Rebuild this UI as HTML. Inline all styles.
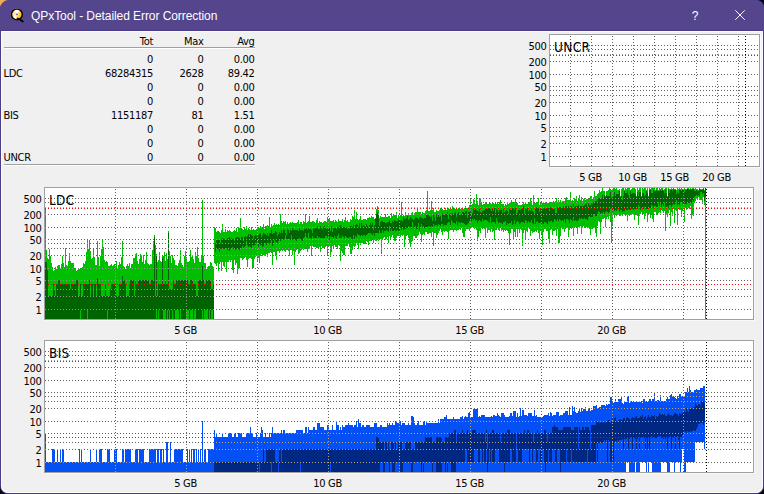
<!DOCTYPE html>
<html><head><meta charset="utf-8"><title>QPxTool - Detailed Error Correction</title>
<style>
html,body{margin:0;padding:0;}
body{width:764px;height:494px;overflow:hidden;background:#05051a;position:relative;}
.corner{position:absolute;left:0;top:0;width:10px;height:10px;background:#ecac58;}
.win{position:absolute;left:0;top:0;width:764px;height:494px;border-radius:9px 8px 8px 8px;background:#4a3c86;overflow:hidden;}
.title{position:absolute;left:0;top:0;width:764px;height:30px;background:#54458c;color:#fff;}
.client{position:absolute;left:1px;top:31px;width:762px;height:462px;border-radius:0 0 7px 7px;background:#f0f0f0;box-shadow:inset 0 0 0 1px #fbfbf8;}
.title .cap{position:absolute;left:31px;top:9px;font:12px/14px 'Liberation Sans',sans-serif;letter-spacing:-0.07px;white-space:nowrap;}
.title .q{position:absolute;left:691px;top:9px;width:8px;font:12px/14px 'Liberation Sans',sans-serif;text-align:center;}
.tbl{position:absolute;left:0;top:0;font:11px/14px 'DejaVu Sans Condensed','DejaVu Sans','Liberation Sans',sans-serif;letter-spacing:-0.3px;color:#000;}
.row{position:absolute;left:0;height:14px;width:260px;white-space:nowrap;}
.row span{position:absolute;top:0;}
.c0{left:3.5px;} .c1{right:107px;} .c2{right:56.5px;} .c3{right:5.5px;}
.hl{position:absolute;left:4px;width:251px;height:1px;background:#a0a0a0;border-bottom:1px solid #fff;}
svg{position:absolute;left:0;top:0;}
.t11{font:11px 'DejaVu Sans Condensed','DejaVu Sans','Liberation Sans',sans-serif;letter-spacing:-0.3px;fill:#000;}
.t13{font:13.5px 'DejaVu Sans Condensed','DejaVu Sans','Liberation Sans',sans-serif;letter-spacing:0.35px;fill:#000;}
</style></head>
<body>
<div class="corner"></div>
<div class="win">
<div class="title">
<svg width="764" height="31" viewBox="0 0 764 31" style="left:0;top:0">
<defs><linearGradient id="ig" x1="0" y1="0.2" x2="1" y2="0.8"><stop offset="0" stop-color="#ffd9a0"/><stop offset="0.45" stop-color="#ffe9a8"/><stop offset="0.75" stop-color="#ffc21a"/><stop offset="1" stop-color="#f0a000"/></linearGradient></defs>
<circle cx="16.9" cy="14.5" r="5.4" fill="url(#ig)"/>
<path d="M16.9 14.5L13.6 9.6A5.9 5.9 0 0 1 20 9.5Z" fill="#fff" opacity="0.85"/>
<path d="M16.9 14.5L12.4 18A5.9 5.9 0 0 0 15.6 20.2Z" fill="#fff" opacity="0.8"/>
<circle cx="16.9" cy="14.5" r="5.4" fill="none" stroke="#000" stroke-width="1.4"/>
<circle cx="16.9" cy="14.4" r="0.8" fill="#5a4a96"/>
<path d="M17.6 18.6L19.5 19.2L22.8 21.5" stroke="#000" stroke-width="1.7" fill="none" stroke-linecap="round"/>
<path d="M735.3 10.3L744.8 19.8M744.8 10.3L735.3 19.8" stroke="#fff" stroke-width="1" fill="none"/>
</svg>
<div class="cap">QPxTool - Detailed Error Correction</div>
<div class="q">?</div>
</div>
<div class="client"></div>
<div class="tbl">
<div class="row" style="top:35px"><span class="c1">Tot</span><span class="c2">Max</span><span class="c3">Avg</span></div>
<div class="hl" style="top:47px"></div>
<div class="row" style="top:53px"><span class="c0"></span><span class="c1">0</span><span class="c2">0</span><span class="c3">0.00</span></div>
<div class="row" style="top:67px"><span class="c0">LDC</span><span class="c1">68284315</span><span class="c2">2628</span><span class="c3">89.42</span></div>
<div class="row" style="top:81px"><span class="c0"></span><span class="c1">0</span><span class="c2">0</span><span class="c3">0.00</span></div>
<div class="row" style="top:95px"><span class="c0"></span><span class="c1">0</span><span class="c2">0</span><span class="c3">0.00</span></div>
<div class="row" style="top:109px"><span class="c0">BIS</span><span class="c1">1151187</span><span class="c2">81</span><span class="c3">1.51</span></div>
<div class="row" style="top:123px"><span class="c0"></span><span class="c1">0</span><span class="c2">0</span><span class="c3">0.00</span></div>
<div class="row" style="top:137px"><span class="c0"></span><span class="c1">0</span><span class="c2">0</span><span class="c3">0.00</span></div>
<div class="row" style="top:151px"><span class="c0">UNCR</span><span class="c1">0</span><span class="c2">0</span><span class="c3">0.00</span></div>
<div class="hl" style="top:164px"></div>
</div>
<svg width="764" height="494" viewBox="0 0 764 494">
<path d="M760.5 35V167.5H550" fill="none" stroke="#f8f8f8" stroke-width="1" shape-rendering="crispEdges"/>
<rect x="549.5" y="34.5" width="210" height="132" fill="#fff" stroke="#a0a0a0" stroke-width="1"/>
<g shape-rendering="crispEdges" stroke-width="1" stroke-dasharray="1 2" ><path d="M550 45.5H759M550 49.5H759M550 61.5H759M550 74.5H759M550 86.5H759M550 90.5H759M550 95.5H759M550 102.5H759M550 115.5H759M550 127.5H759M550 136.5H759M550 143.5H759M550 156.5H759M570.5 36V166M591.5 36V166M612.5 36V166M633.5 36V166M654.5 36V166M675.5 36V166M696.5 36V166M717.5 36V166M738.5 36V166" stroke="#606060" fill="none"/><path d="M550 54.5H759" stroke="#98a8a8" fill="none"/><path d="M550 55.5H759M550 131.5H759" stroke="#ff0000" fill="none"/></g>
<path d="M745.5 36V166" stroke="#000" stroke-width="1" stroke-dasharray="1 2" shape-rendering="crispEdges" fill="none"/>
<text x="546.5" y="50" text-anchor="end" class="t11">500</text>
<text x="546.5" y="66" text-anchor="end" class="t11">200</text>
<text x="546.5" y="79" text-anchor="end" class="t11">100</text>
<text x="546.5" y="91" text-anchor="end" class="t11">50</text>
<text x="546.5" y="107" text-anchor="end" class="t11">20</text>
<text x="546.5" y="120" text-anchor="end" class="t11">10</text>
<text x="546.5" y="132" text-anchor="end" class="t11">5</text>
<text x="546.5" y="148" text-anchor="end" class="t11">2</text>
<text x="546.5" y="161" text-anchor="end" class="t11">1</text>
<text x="590.6" y="181" text-anchor="middle" class="t11">5 GB</text>
<text x="632.6" y="181" text-anchor="middle" class="t11">10 GB</text>
<text x="674.6" y="181" text-anchor="middle" class="t11">15 GB</text>
<text x="716.6" y="181" text-anchor="middle" class="t11">20 GB</text>
<text x="554" y="52" class="t13">UNCR</text>
<path d="M754.5 188V320.5H45" fill="none" stroke="#f8f8f8" stroke-width="1" shape-rendering="crispEdges"/>
<rect x="44.5" y="187.5" width="709" height="132" fill="#fff" stroke="#a0a0a0" stroke-width="1"/>
<g shape-rendering="crispEdges" stroke-width="1" stroke-dasharray="1 2" ><path d="M45 198.5H753M45 202.5H753M45 214.5H753M45 227.5H753M45 239.5H753M45 243.5H753M45 248.5H753M45 255.5H753M45 268.5H753M45 280.5H753M45 289.5H753M45 296.5H753M45 309.5H753M115.5 189V319M186.5 189V319M257.5 189V319M328.5 189V319M399.5 189V319M470.5 189V319M541.5 189V319M612.5 189V319M683.5 189V319" stroke="#606060" fill="none"/><path d="M45 207.5H753" stroke="#98a8a8" fill="none"/><path d="M45 208.5H753M45 284.5H753" stroke="#ff0000" fill="none"/></g>
<defs><clipPath id="cl"><path d="M45 208v111h1v-111zM46 250v69h1v-69zM47 258v61h1v-61zM48 259v60h1v-60zM49 249v70h1v-70zM50 256v63h1v-63zM51 263v56h1v-56zM52 267v52h1v-52zM53 271v48h1v-48zM54 270v49h1v-49zM55 267v52h1v-52zM56 269v50h1v-50zM57 266v53h1v-53zM58 265v54h1v-54zM59 265v54h1v-54zM60 268v51h1v-51zM61 264v55h1v-55zM62 256v63h1v-63zM63 263v56h1v-56zM64 267v52h1v-52zM65 248v71h1v-71zM66 265v54h1v-54zM67 266v53h1v-53zM68 261v58h1v-58zM69 253v66h1v-66zM70 261v58h1v-58zM71 263v56h1v-56zM72 263v56h1v-56zM73 263v56h1v-56zM74 268v51h1v-51zM75 269v50h1v-50zM76 271v48h1v-48zM77 270v49h1v-49zM78 268v51h1v-51zM79 269v50h1v-50zM80 268v51h1v-51zM81 269v50h1v-50zM82 267v52h1v-52zM83 263v56h1v-56zM84 264v55h1v-55zM85 261v58h1v-58zM86 252v67h1v-67zM87 240v79h1v-79zM88 249v70h1v-70zM89 240v79h1v-79zM90 251v68h1v-68zM91 259v60h1v-60zM92 258v61h1v-61zM93 249v70h1v-70zM94 257v62h1v-62zM95 265v54h1v-54zM96 265v54h1v-54zM97 241v78h1v-78zM98 257v62h1v-62zM99 266v53h1v-53zM100 256v63h1v-63zM101 249v70h1v-70zM102 240v79h1v-79zM103 247v72h1v-72zM104 260v59h1v-59zM105 262v57h1v-57zM106 261v58h1v-58zM107 262v57h1v-57zM108 266v53h1v-53zM109 266v53h1v-53zM110 265v54h1v-54zM111 264v55h1v-55zM112 266v53h1v-53zM113 265v54h1v-54zM114 264v55h1v-55zM115 266v53h1v-53zM116 261v58h1v-58zM117 268v51h1v-51zM118 265v54h1v-54zM119 262v57h1v-57zM120 264v55h1v-55zM121 257v62h1v-62zM122 241v78h1v-78zM123 266v53h1v-53zM124 267v52h1v-52zM125 269v50h1v-50zM126 266v53h1v-53zM127 264v55h1v-55zM128 266v53h1v-53zM129 263v56h1v-56zM130 268v51h1v-51zM131 264v55h1v-55zM132 264v55h1v-55zM133 258v61h1v-61zM134 258v61h1v-61zM135 254v65h1v-65zM136 253v66h1v-66zM137 261v58h1v-58zM138 264v55h1v-55zM139 259v60h1v-60zM140 254v65h1v-65zM141 255v64h1v-64zM142 262v57h1v-57zM143 255v64h1v-64zM144 264v55h1v-55zM145 260v59h1v-59zM146 252v67h1v-67zM147 263v56h1v-56zM148 264v55h1v-55zM149 265v54h1v-54zM150 264v55h1v-55zM151 264v55h1v-55zM152 250v69h1v-69zM153 241v78h1v-78zM154 235v84h1v-84zM155 245v74h1v-74zM156 254v65h1v-65zM157 262v57h1v-57zM158 260v59h1v-59zM159 252v67h1v-67zM160 261v58h1v-58zM161 262v57h1v-57zM162 256v63h1v-63zM163 256v63h1v-63zM164 252v67h1v-67zM165 261v58h1v-58zM166 253v66h1v-66zM167 259v60h1v-60zM168 231v88h1v-88zM169 251v68h1v-68zM170 256v63h1v-63zM171 263v56h1v-56zM172 255v64h1v-64zM173 258v61h1v-61zM174 260v59h1v-59zM175 265v54h1v-54zM176 265v54h1v-54zM177 266v53h1v-53zM178 263v56h1v-56zM179 260v59h1v-59zM180 250v69h1v-69zM181 263v56h1v-56zM182 265v54h1v-54zM183 267v52h1v-52zM184 256v63h1v-63zM185 251v68h1v-68zM186 257v62h1v-62zM187 262v57h1v-57zM188 262v57h1v-57zM189 261v58h1v-58zM190 250v69h1v-69zM191 257v62h1v-62zM192 255v64h1v-64zM193 259v60h1v-60zM194 263v56h1v-56zM195 252v67h1v-67zM196 256v63h1v-63zM197 247v72h1v-72zM198 258v61h1v-61zM199 262v57h1v-57zM200 262v57h1v-57zM201 256v63h1v-63zM202 200v119h1v-119zM203 256v63h1v-63zM204 263v56h1v-56zM205 263v56h1v-56zM206 269v50h1v-50zM207 267v52h1v-52zM208 266v53h1v-53zM209 266v53h1v-53zM210 262v57h1v-57zM211 263v56h1v-56zM212 266v53h1v-53zM213 267v52h1v-52zM214 227v36h1v-36zM215 228v36h1v-36zM216 232v34h1v-34zM217 231v32h1v-32zM218 231v40h1v-40zM219 232v32h1v-32zM220 233v29h1v-29zM221 230v41h1v-41zM222 224v38h1v-38zM223 232v34h1v-34zM224 232v35h1v-35zM225 229v33h1v-33zM226 232v40h1v-40zM227 230v32h1v-32zM228 231v31h1v-31zM229 230v30h1v-30zM230 231v31h1v-31zM231 232v28h1v-28zM232 232v38h1v-38zM233 231v42h1v-42zM234 230v30h1v-30zM235 231v34h1v-34zM236 228v35h1v-35zM237 232v42h1v-42zM238 227v42h1v-42zM239 228v40h1v-40zM240 218v40h1v-40zM241 228v30h1v-30zM242 229v31h1v-31zM243 230v29h1v-29zM244 227v31h1v-31zM245 229v28h1v-28zM246 226v34h1v-34zM247 230v37h1v-37zM248 228v31h1v-31zM249 229v29h1v-29zM250 230v28h1v-28zM251 227v32h1v-32zM252 230v38h1v-38zM253 229v39h1v-39zM254 230v29h1v-29zM255 230v27h1v-27zM256 229v27h1v-27zM257 227v34h1v-34zM258 228v30h1v-30zM259 228v35h1v-35zM260 226v30h1v-30zM261 227v27h1v-27zM262 227v29h1v-29zM263 224v31h1v-31zM264 229v27h1v-27zM265 226v30h1v-30zM266 226v28h1v-28zM267 225v32h1v-32zM268 226v27h1v-27zM269 217v36h1v-36zM270 227v25h1v-25zM271 224v29h1v-29zM272 226v39h1v-39zM273 225v27h1v-27zM274 223v29h1v-29zM275 225v31h1v-31zM276 224v36h1v-36zM277 225v26h1v-26zM278 224v27h1v-27zM279 225v28h1v-28zM280 214v37h1v-37zM281 221v29h1v-29zM282 223v28h1v-28zM283 221v29h1v-29zM284 222v29h1v-29zM285 221v31h1v-31zM286 224v26h1v-26zM287 222v28h1v-28zM288 224v27h1v-27zM289 223v33h1v-33zM290 222v28h1v-28zM291 223v27h1v-27zM292 222v33h1v-33zM293 223v28h1v-28zM294 223v42h1v-42zM295 223v29h1v-29zM296 223v27h1v-27zM297 222v26h1v-26zM298 220v34h1v-34zM299 224v29h1v-29zM300 222v29h1v-29zM301 222v28h1v-28zM302 224v25h1v-25zM303 221v29h1v-29zM304 222v27h1v-27zM305 214v35h1v-35zM306 223v25h1v-25zM307 222v30h1v-30zM308 221v28h1v-28zM309 216v33h1v-33zM310 222v24h1v-24zM311 222v34h1v-34zM312 221v25h1v-25zM313 221v26h1v-26zM314 222v25h1v-25zM315 223v24h1v-24zM316 220v28h1v-28zM317 218v30h1v-30zM318 223v25h1v-25zM319 221v26h1v-26zM320 222v30h1v-30zM321 222v24h1v-24zM322 223v25h1v-25zM323 222v26h1v-26zM324 221v27h1v-27zM325 221v26h1v-26zM326 222v24h1v-24zM327 217v38h1v-38zM328 220v26h1v-26zM329 218v28h1v-28zM330 221v36h1v-36zM331 221v31h1v-31zM332 221v25h1v-25zM333 220v28h1v-28zM334 222v23h1v-23zM335 220v27h1v-27zM336 221v26h1v-26zM337 222v27h1v-27zM338 219v26h1v-26zM339 221v25h1v-25zM340 221v40h1v-40zM341 221v30h1v-30zM342 219v34h1v-34zM343 222v33h1v-33zM344 220v35h1v-35zM345 217v29h1v-29zM346 221v25h1v-25zM347 220v26h1v-26zM348 222v22h1v-22zM349 222v25h1v-25zM350 219v35h1v-35zM351 220v34h1v-34zM352 216v34h1v-34zM353 217v29h1v-29zM354 210v37h1v-37zM355 219v27h1v-27zM356 212v31h1v-31zM357 219v26h1v-26zM358 220v29h1v-29zM359 219v24h1v-24zM360 216v29h1v-29zM361 220v23h1v-23zM362 220v23h1v-23zM363 219v24h1v-24zM364 219v25h1v-25zM365 219v25h1v-25zM366 220v21h1v-21zM367 218v24h1v-24zM368 218v27h1v-27zM369 217v24h1v-24zM370 218v23h1v-23zM371 216v25h1v-25zM372 217v22h1v-22zM373 217v26h1v-26zM374 219v21h1v-21zM375 218v23h1v-23zM376 209v32h1v-32zM377 206v34h1v-34zM378 210v31h1v-31zM379 218v22h1v-22zM380 216v23h1v-23zM381 217v37h1v-37zM382 217v23h1v-23zM383 217v21h1v-21zM384 217v20h1v-20zM385 214v26h1v-26zM386 217v22h1v-22zM387 217v20h1v-20zM388 216v27h1v-27zM389 216v20h1v-20zM390 218v21h1v-21zM391 213v24h1v-24zM392 216v19h1v-19zM393 215v23h1v-23zM394 215v26h1v-26zM395 215v26h1v-26zM396 212v26h1v-26zM397 218v18h1v-18zM398 215v21h1v-21zM399 216v20h1v-20zM400 215v22h1v-22zM401 202v33h1v-33zM402 216v20h1v-20zM403 215v20h1v-20zM404 216v31h1v-31zM405 212v28h1v-28zM406 215v21h1v-21zM407 215v20h1v-20zM408 213v25h1v-25zM409 215v28h1v-28zM410 215v32h1v-32zM411 213v29h1v-29zM412 212v29h1v-29zM413 215v21h1v-21zM414 213v23h1v-23zM415 212v26h1v-26zM416 212v26h1v-26zM417 209v27h1v-27zM418 212v23h1v-23zM419 212v20h1v-20zM420 212v22h1v-22zM421 214v28h1v-28zM422 212v23h1v-23zM423 213v21h1v-21zM424 213v22h1v-22zM425 211v21h1v-21zM426 210v22h1v-22zM427 191v43h1v-43zM428 211v23h1v-23zM429 211v22h1v-22zM430 210v23h1v-23zM431 201v36h1v-36zM432 210v22h1v-22zM433 208v38h1v-38zM434 212v21h1v-21zM435 212v21h1v-21zM436 210v28h1v-28zM437 211v24h1v-24zM438 211v22h1v-22zM439 210v21h1v-21zM440 208v21h1v-21zM441 209v23h1v-23zM442 209v26h1v-26zM443 210v21h1v-21zM444 210v22h1v-22zM445 208v23h1v-23zM446 210v21h1v-21zM447 209v23h1v-23zM448 208v31h1v-31zM449 209v22h1v-22zM450 207v23h1v-23zM451 209v21h1v-21zM452 206v24h1v-24zM453 208v24h1v-24zM454 208v22h1v-22zM455 209v21h1v-21zM456 208v23h1v-23zM457 209v21h1v-21zM458 208v22h1v-22zM459 209v20h1v-20zM460 209v21h1v-21zM461 208v20h1v-20zM462 209v24h1v-24zM463 209v28h1v-28zM464 208v29h1v-29zM465 206v25h1v-25zM466 208v21h1v-21zM467 208v21h1v-21zM468 208v21h1v-21zM469 205v26h1v-26zM470 199v30h1v-30zM471 205v23h1v-23zM472 204v23h1v-23zM473 199v29h1v-29zM474 200v29h1v-29zM475 204v24h1v-24zM476 194v36h1v-36zM477 201v40h1v-40zM478 205v32h1v-32zM479 198v33h1v-33zM480 198v35h1v-35zM481 202v26h1v-26zM482 205v24h1v-24zM483 204v23h1v-23zM484 204v25h1v-25zM485 202v36h1v-36zM486 203v25h1v-25zM487 204v29h1v-29zM488 204v26h1v-26zM489 203v27h1v-27zM490 203v29h1v-29zM491 204v25h1v-25zM492 203v29h1v-29zM493 203v28h1v-28zM494 204v36h1v-36zM495 203v27h1v-27zM496 204v26h1v-26zM497 202v26h1v-26zM498 204v26h1v-26zM499 202v29h1v-29zM500 200v28h1v-28zM501 204v27h1v-27zM502 204v26h1v-26zM503 204v28h1v-28zM504 206v24h1v-24zM505 204v27h1v-27zM506 205v25h1v-25zM507 202v29h1v-29zM508 204v29h1v-29zM509 203v42h1v-42zM510 202v31h1v-31zM511 200v29h1v-29zM512 202v27h1v-27zM513 203v37h1v-37zM514 202v30h1v-30zM515 199v38h1v-38zM516 203v26h1v-26zM517 203v34h1v-34zM518 205v24h1v-24zM519 205v28h1v-28zM520 205v24h1v-24zM521 205v25h1v-25zM522 204v42h1v-42zM523 202v31h1v-31zM524 204v26h1v-26zM525 202v37h1v-37zM526 204v27h1v-27zM527 204v28h1v-28zM528 203v25h1v-25zM529 202v27h1v-27zM530 198v38h1v-38zM531 201v30h1v-30zM532 205v28h1v-28zM533 195v37h1v-37zM534 203v29h1v-29zM535 203v28h1v-28zM536 202v30h1v-30zM537 203v27h1v-27zM538 198v35h1v-35zM539 205v34h1v-34zM540 203v28h1v-28zM541 202v32h1v-32zM542 203v42h1v-42zM543 202v30h1v-30zM544 203v26h1v-26zM545 202v27h1v-27zM546 203v28h1v-28zM547 203v28h1v-28zM548 203v36h1v-36zM549 203v41h1v-41zM550 202v28h1v-28zM551 202v27h1v-27zM552 202v33h1v-33zM553 201v30h1v-30zM554 202v29h1v-29zM555 201v29h1v-29zM556 198v38h1v-38zM557 202v27h1v-27zM558 200v44h1v-44zM559 202v41h1v-41zM560 200v36h1v-36zM561 202v26h1v-26zM562 201v28h1v-28zM563 201v28h1v-28zM564 201v31h1v-31zM565 198v31h1v-31zM566 197v31h1v-31zM567 200v28h1v-28zM568 200v37h1v-37zM569 200v30h1v-30zM570 192v35h1v-35zM571 201v28h1v-28zM572 200v28h1v-28zM573 201v35h1v-35zM574 198v30h1v-30zM575 199v28h1v-28zM576 196v31h1v-31zM577 201v33h1v-33zM578 198v29h1v-29zM579 195v33h1v-33zM580 200v26h1v-26zM581 197v37h1v-37zM582 201v27h1v-27zM583 199v27h1v-27zM584 198v30h1v-30zM585 200v27h1v-27zM586 199v28h1v-28zM587 199v29h1v-29zM588 199v29h1v-29zM589 198v31h1v-31zM590 196v39h1v-39zM591 196v33h1v-33zM592 199v30h1v-30zM593 197v31h1v-31zM594 191v37h1v-37zM595 196v37h1v-37zM596 196v41h1v-41zM597 194v32h1v-32zM598 193v28h1v-28zM599 190v32h1v-32zM600 192v42h1v-42zM601 191v31h1v-31zM602 188v31h1v-31zM603 191v28h1v-28zM604 191v27h1v-27zM605 196v31h1v-31zM606 191v28h1v-28zM607 191v26h1v-26zM608 190v29h1v-29zM609 188v28h1v-28zM610 189v33h1v-33zM611 190v53h1v-53zM612 189v36h1v-36zM613 188v27h1v-27zM614 188v30h1v-30zM615 189v25h1v-25zM616 188v28h1v-28zM617 190v25h1v-25zM618 190v25h1v-25zM619 189v27h1v-27zM620 196v20h1v-20zM621 189v26h1v-26zM622 188v28h1v-28zM623 188v26h1v-26zM624 190v25h1v-25zM625 188v28h1v-28zM626 189v26h1v-26zM627 188v33h1v-33zM628 188v27h1v-27zM629 188v28h1v-28zM630 190v25h1v-25zM631 189v26h1v-26zM632 188v26h1v-26zM633 188v27h1v-27zM634 188v32h1v-32zM635 189v26h1v-26zM636 196v18h1v-18zM637 188v28h1v-28zM638 190v35h1v-35zM639 188v28h1v-28zM640 188v26h1v-26zM641 196v16h1v-16zM642 188v26h1v-26zM643 189v25h1v-25zM644 188v31h1v-31zM645 188v28h1v-28zM646 190v23h1v-23zM647 188v34h1v-34zM648 196v18h1v-18zM649 188v26h1v-26zM650 189v29h1v-29zM651 188v26h1v-26zM652 188v31h1v-31zM653 188v34h1v-34zM654 188v24h1v-24zM655 190v22h1v-22zM656 188v27h1v-27zM657 188v26h1v-26zM658 190v23h1v-23zM659 188v24h1v-24zM660 189v24h1v-24zM661 188v22h1v-22zM662 188v23h1v-23zM663 190v23h1v-23zM664 189v22h1v-22zM665 188v43h1v-43zM666 188v27h1v-27zM667 196v21h1v-21zM668 188v25h1v-25zM669 189v21h1v-21zM670 189v37h1v-37zM671 188v24h1v-24zM672 189v27h1v-27zM673 188v21h1v-21zM674 189v34h1v-34zM675 189v21h1v-21zM676 190v21h1v-21zM677 188v37h1v-37zM678 189v20h1v-20zM679 188v22h1v-22zM680 189v21h1v-21zM681 188v29h1v-29zM682 189v22h1v-22zM683 189v20h1v-20zM684 188v34h1v-34zM685 189v19h1v-19zM686 189v21h1v-21zM687 188v21h1v-21zM688 188v20h1v-20zM689 189v20h1v-20zM690 188v18h1v-18zM691 189v30h1v-30zM692 188v27h1v-27zM693 188v28h1v-28zM694 189v14h1v-14zM695 188v13h1v-13zM696 189v10h1v-10zM697 189v11h1v-11zM698 190v7h1v-7zM699 188v12h1v-12zM700 189v11h1v-11zM701 189v11h1v-11zM702 189v15h1v-15zM703 188v9h1v-9zM704 190v15h1v-15zM705 188v131h1v-131z"/></clipPath></defs><g shape-rendering="crispEdges"><path d="M45 208v111h1v-111zM46 250v69h1v-69zM47 258v61h1v-61zM48 259v60h1v-60zM49 249v70h1v-70zM50 256v63h1v-63zM51 263v56h1v-56zM52 267v52h1v-52zM53 271v48h1v-48zM54 270v49h1v-49zM55 267v52h1v-52zM56 269v50h1v-50zM57 266v53h1v-53zM58 265v54h1v-54zM59 265v54h1v-54zM60 268v51h1v-51zM61 264v55h1v-55zM62 256v63h1v-63zM63 263v56h1v-56zM64 267v52h1v-52zM65 248v71h1v-71zM66 265v54h1v-54zM67 266v53h1v-53zM68 261v58h1v-58zM69 253v66h1v-66zM70 261v58h1v-58zM71 263v56h1v-56zM72 263v56h1v-56zM73 263v56h1v-56zM74 268v51h1v-51zM75 269v50h1v-50zM76 271v48h1v-48zM77 270v49h1v-49zM78 268v51h1v-51zM79 269v50h1v-50zM80 268v51h1v-51zM81 269v50h1v-50zM82 267v52h1v-52zM83 263v56h1v-56zM84 264v55h1v-55zM85 261v58h1v-58zM86 252v67h1v-67zM87 240v79h1v-79zM88 249v70h1v-70zM89 240v79h1v-79zM90 251v68h1v-68zM91 259v60h1v-60zM92 258v61h1v-61zM93 249v70h1v-70zM94 257v62h1v-62zM95 265v54h1v-54zM96 265v54h1v-54zM97 241v78h1v-78zM98 257v62h1v-62zM99 266v53h1v-53zM100 256v63h1v-63zM101 249v70h1v-70zM102 240v79h1v-79zM103 247v72h1v-72zM104 260v59h1v-59zM105 262v57h1v-57zM106 261v58h1v-58zM107 262v57h1v-57zM108 266v53h1v-53zM109 266v53h1v-53zM110 265v54h1v-54zM111 264v55h1v-55zM112 266v53h1v-53zM113 265v54h1v-54zM114 264v55h1v-55zM115 266v53h1v-53zM116 261v58h1v-58zM117 268v51h1v-51zM118 265v54h1v-54zM119 262v57h1v-57zM120 264v55h1v-55zM121 257v62h1v-62zM122 241v78h1v-78zM123 266v53h1v-53zM124 267v52h1v-52zM125 269v50h1v-50zM126 266v53h1v-53zM127 264v55h1v-55zM128 266v53h1v-53zM129 263v56h1v-56zM130 268v51h1v-51zM131 264v55h1v-55zM132 264v55h1v-55zM133 258v61h1v-61zM134 258v61h1v-61zM135 254v65h1v-65zM136 253v66h1v-66zM137 261v58h1v-58zM138 264v55h1v-55zM139 259v60h1v-60zM140 254v65h1v-65zM141 255v64h1v-64zM142 262v57h1v-57zM143 255v64h1v-64zM144 264v55h1v-55zM145 260v59h1v-59zM146 252v67h1v-67zM147 263v56h1v-56zM148 264v55h1v-55zM149 265v54h1v-54zM150 264v55h1v-55zM151 264v55h1v-55zM152 250v69h1v-69zM153 241v78h1v-78zM154 235v84h1v-84zM155 245v74h1v-74zM156 254v65h1v-65zM157 262v57h1v-57zM158 260v59h1v-59zM159 252v67h1v-67zM160 261v58h1v-58zM161 262v57h1v-57zM162 256v63h1v-63zM163 256v63h1v-63zM164 252v67h1v-67zM165 261v58h1v-58zM166 253v66h1v-66zM167 259v60h1v-60zM168 231v88h1v-88zM169 251v68h1v-68zM170 256v63h1v-63zM171 263v56h1v-56zM172 255v64h1v-64zM173 258v61h1v-61zM174 260v59h1v-59zM175 265v54h1v-54zM176 265v54h1v-54zM177 266v53h1v-53zM178 263v56h1v-56zM179 260v59h1v-59zM180 250v69h1v-69zM181 263v56h1v-56zM182 265v54h1v-54zM183 267v52h1v-52zM184 256v63h1v-63zM185 251v68h1v-68zM186 257v62h1v-62zM187 262v57h1v-57zM188 262v57h1v-57zM189 261v58h1v-58zM190 250v69h1v-69zM191 257v62h1v-62zM192 255v64h1v-64zM193 259v60h1v-60zM194 263v56h1v-56zM195 252v67h1v-67zM196 256v63h1v-63zM197 247v72h1v-72zM198 258v61h1v-61zM199 262v57h1v-57zM200 262v57h1v-57zM201 256v63h1v-63zM202 200v119h1v-119zM203 256v63h1v-63zM204 263v56h1v-56zM205 263v56h1v-56zM206 269v50h1v-50zM207 267v52h1v-52zM208 266v53h1v-53zM209 266v53h1v-53zM210 262v57h1v-57zM211 263v56h1v-56zM212 266v53h1v-53zM213 267v52h1v-52zM214 227v36h1v-36zM215 228v36h1v-36zM216 232v34h1v-34zM217 231v32h1v-32zM218 231v40h1v-40zM219 232v32h1v-32zM220 233v29h1v-29zM221 230v41h1v-41zM222 224v38h1v-38zM223 232v34h1v-34zM224 232v35h1v-35zM225 229v33h1v-33zM226 232v40h1v-40zM227 230v32h1v-32zM228 231v31h1v-31zM229 230v30h1v-30zM230 231v31h1v-31zM231 232v28h1v-28zM232 232v38h1v-38zM233 231v42h1v-42zM234 230v30h1v-30zM235 231v34h1v-34zM236 228v35h1v-35zM237 232v42h1v-42zM238 227v42h1v-42zM239 228v40h1v-40zM240 218v40h1v-40zM241 228v30h1v-30zM242 229v31h1v-31zM243 230v29h1v-29zM244 227v31h1v-31zM245 229v28h1v-28zM246 226v34h1v-34zM247 230v37h1v-37zM248 228v31h1v-31zM249 229v29h1v-29zM250 230v28h1v-28zM251 227v32h1v-32zM252 230v38h1v-38zM253 229v39h1v-39zM254 230v29h1v-29zM255 230v27h1v-27zM256 229v27h1v-27zM257 227v34h1v-34zM258 228v30h1v-30zM259 228v35h1v-35zM260 226v30h1v-30zM261 227v27h1v-27zM262 227v29h1v-29zM263 224v31h1v-31zM264 229v27h1v-27zM265 226v30h1v-30zM266 226v28h1v-28zM267 225v32h1v-32zM268 226v27h1v-27zM269 217v36h1v-36zM270 227v25h1v-25zM271 224v29h1v-29zM272 226v39h1v-39zM273 225v27h1v-27zM274 223v29h1v-29zM275 225v31h1v-31zM276 224v36h1v-36zM277 225v26h1v-26zM278 224v27h1v-27zM279 225v28h1v-28zM280 214v37h1v-37zM281 221v29h1v-29zM282 223v28h1v-28zM283 221v29h1v-29zM284 222v29h1v-29zM285 221v31h1v-31zM286 224v26h1v-26zM287 222v28h1v-28zM288 224v27h1v-27zM289 223v33h1v-33zM290 222v28h1v-28zM291 223v27h1v-27zM292 222v33h1v-33zM293 223v28h1v-28zM294 223v42h1v-42zM295 223v29h1v-29zM296 223v27h1v-27zM297 222v26h1v-26zM298 220v34h1v-34zM299 224v29h1v-29zM300 222v29h1v-29zM301 222v28h1v-28zM302 224v25h1v-25zM303 221v29h1v-29zM304 222v27h1v-27zM305 214v35h1v-35zM306 223v25h1v-25zM307 222v30h1v-30zM308 221v28h1v-28zM309 216v33h1v-33zM310 222v24h1v-24zM311 222v34h1v-34zM312 221v25h1v-25zM313 221v26h1v-26zM314 222v25h1v-25zM315 223v24h1v-24zM316 220v28h1v-28zM317 218v30h1v-30zM318 223v25h1v-25zM319 221v26h1v-26zM320 222v30h1v-30zM321 222v24h1v-24zM322 223v25h1v-25zM323 222v26h1v-26zM324 221v27h1v-27zM325 221v26h1v-26zM326 222v24h1v-24zM327 217v38h1v-38zM328 220v26h1v-26zM329 218v28h1v-28zM330 221v36h1v-36zM331 221v31h1v-31zM332 221v25h1v-25zM333 220v28h1v-28zM334 222v23h1v-23zM335 220v27h1v-27zM336 221v26h1v-26zM337 222v27h1v-27zM338 219v26h1v-26zM339 221v25h1v-25zM340 221v40h1v-40zM341 221v30h1v-30zM342 219v34h1v-34zM343 222v33h1v-33zM344 220v35h1v-35zM345 217v29h1v-29zM346 221v25h1v-25zM347 220v26h1v-26zM348 222v22h1v-22zM349 222v25h1v-25zM350 219v35h1v-35zM351 220v34h1v-34zM352 216v34h1v-34zM353 217v29h1v-29zM354 210v37h1v-37zM355 219v27h1v-27zM356 212v31h1v-31zM357 219v26h1v-26zM358 220v29h1v-29zM359 219v24h1v-24zM360 216v29h1v-29zM361 220v23h1v-23zM362 220v23h1v-23zM363 219v24h1v-24zM364 219v25h1v-25zM365 219v25h1v-25zM366 220v21h1v-21zM367 218v24h1v-24zM368 218v27h1v-27zM369 217v24h1v-24zM370 218v23h1v-23zM371 216v25h1v-25zM372 217v22h1v-22zM373 217v26h1v-26zM374 219v21h1v-21zM375 218v23h1v-23zM376 209v32h1v-32zM377 206v34h1v-34zM378 210v31h1v-31zM379 218v22h1v-22zM380 216v23h1v-23zM381 217v37h1v-37zM382 217v23h1v-23zM383 217v21h1v-21zM384 217v20h1v-20zM385 214v26h1v-26zM386 217v22h1v-22zM387 217v20h1v-20zM388 216v27h1v-27zM389 216v20h1v-20zM390 218v21h1v-21zM391 213v24h1v-24zM392 216v19h1v-19zM393 215v23h1v-23zM394 215v26h1v-26zM395 215v26h1v-26zM396 212v26h1v-26zM397 218v18h1v-18zM398 215v21h1v-21zM399 216v20h1v-20zM400 215v22h1v-22zM401 202v33h1v-33zM402 216v20h1v-20zM403 215v20h1v-20zM404 216v31h1v-31zM405 212v28h1v-28zM406 215v21h1v-21zM407 215v20h1v-20zM408 213v25h1v-25zM409 215v28h1v-28zM410 215v32h1v-32zM411 213v29h1v-29zM412 212v29h1v-29zM413 215v21h1v-21zM414 213v23h1v-23zM415 212v26h1v-26zM416 212v26h1v-26zM417 209v27h1v-27zM418 212v23h1v-23zM419 212v20h1v-20zM420 212v22h1v-22zM421 214v28h1v-28zM422 212v23h1v-23zM423 213v21h1v-21zM424 213v22h1v-22zM425 211v21h1v-21zM426 210v22h1v-22zM427 191v43h1v-43zM428 211v23h1v-23zM429 211v22h1v-22zM430 210v23h1v-23zM431 201v36h1v-36zM432 210v22h1v-22zM433 208v38h1v-38zM434 212v21h1v-21zM435 212v21h1v-21zM436 210v28h1v-28zM437 211v24h1v-24zM438 211v22h1v-22zM439 210v21h1v-21zM440 208v21h1v-21zM441 209v23h1v-23zM442 209v26h1v-26zM443 210v21h1v-21zM444 210v22h1v-22zM445 208v23h1v-23zM446 210v21h1v-21zM447 209v23h1v-23zM448 208v31h1v-31zM449 209v22h1v-22zM450 207v23h1v-23zM451 209v21h1v-21zM452 206v24h1v-24zM453 208v24h1v-24zM454 208v22h1v-22zM455 209v21h1v-21zM456 208v23h1v-23zM457 209v21h1v-21zM458 208v22h1v-22zM459 209v20h1v-20zM460 209v21h1v-21zM461 208v20h1v-20zM462 209v24h1v-24zM463 209v28h1v-28zM464 208v29h1v-29zM465 206v25h1v-25zM466 208v21h1v-21zM467 208v21h1v-21zM468 208v21h1v-21zM469 205v26h1v-26zM470 199v30h1v-30zM471 205v23h1v-23zM472 204v23h1v-23zM473 199v29h1v-29zM474 200v29h1v-29zM475 204v24h1v-24zM476 194v36h1v-36zM477 201v40h1v-40zM478 205v32h1v-32zM479 198v33h1v-33zM480 198v35h1v-35zM481 202v26h1v-26zM482 205v24h1v-24zM483 204v23h1v-23zM484 204v25h1v-25zM485 202v36h1v-36zM486 203v25h1v-25zM487 204v29h1v-29zM488 204v26h1v-26zM489 203v27h1v-27zM490 203v29h1v-29zM491 204v25h1v-25zM492 203v29h1v-29zM493 203v28h1v-28zM494 204v36h1v-36zM495 203v27h1v-27zM496 204v26h1v-26zM497 202v26h1v-26zM498 204v26h1v-26zM499 202v29h1v-29zM500 200v28h1v-28zM501 204v27h1v-27zM502 204v26h1v-26zM503 204v28h1v-28zM504 206v24h1v-24zM505 204v27h1v-27zM506 205v25h1v-25zM507 202v29h1v-29zM508 204v29h1v-29zM509 203v42h1v-42zM510 202v31h1v-31zM511 200v29h1v-29zM512 202v27h1v-27zM513 203v37h1v-37zM514 202v30h1v-30zM515 199v38h1v-38zM516 203v26h1v-26zM517 203v34h1v-34zM518 205v24h1v-24zM519 205v28h1v-28zM520 205v24h1v-24zM521 205v25h1v-25zM522 204v42h1v-42zM523 202v31h1v-31zM524 204v26h1v-26zM525 202v37h1v-37zM526 204v27h1v-27zM527 204v28h1v-28zM528 203v25h1v-25zM529 202v27h1v-27zM530 198v38h1v-38zM531 201v30h1v-30zM532 205v28h1v-28zM533 195v37h1v-37zM534 203v29h1v-29zM535 203v28h1v-28zM536 202v30h1v-30zM537 203v27h1v-27zM538 198v35h1v-35zM539 205v34h1v-34zM540 203v28h1v-28zM541 202v32h1v-32zM542 203v42h1v-42zM543 202v30h1v-30zM544 203v26h1v-26zM545 202v27h1v-27zM546 203v28h1v-28zM547 203v28h1v-28zM548 203v36h1v-36zM549 203v41h1v-41zM550 202v28h1v-28zM551 202v27h1v-27zM552 202v33h1v-33zM553 201v30h1v-30zM554 202v29h1v-29zM555 201v29h1v-29zM556 198v38h1v-38zM557 202v27h1v-27zM558 200v44h1v-44zM559 202v41h1v-41zM560 200v36h1v-36zM561 202v26h1v-26zM562 201v28h1v-28zM563 201v28h1v-28zM564 201v31h1v-31zM565 198v31h1v-31zM566 197v31h1v-31zM567 200v28h1v-28zM568 200v37h1v-37zM569 200v30h1v-30zM570 192v35h1v-35zM571 201v28h1v-28zM572 200v28h1v-28zM573 201v35h1v-35zM574 198v30h1v-30zM575 199v28h1v-28zM576 196v31h1v-31zM577 201v33h1v-33zM578 198v29h1v-29zM579 195v33h1v-33zM580 200v26h1v-26zM581 197v37h1v-37zM582 201v27h1v-27zM583 199v27h1v-27zM584 198v30h1v-30zM585 200v27h1v-27zM586 199v28h1v-28zM587 199v29h1v-29zM588 199v29h1v-29zM589 198v31h1v-31zM590 196v39h1v-39zM591 196v33h1v-33zM592 199v30h1v-30zM593 197v31h1v-31zM594 191v37h1v-37zM595 196v37h1v-37zM596 196v41h1v-41zM597 194v32h1v-32zM598 193v28h1v-28zM599 190v32h1v-32zM600 192v42h1v-42zM601 191v31h1v-31zM602 188v31h1v-31zM603 191v28h1v-28zM604 191v27h1v-27zM605 196v31h1v-31zM606 191v28h1v-28zM607 191v26h1v-26zM608 190v29h1v-29zM609 188v28h1v-28zM610 189v33h1v-33zM611 190v53h1v-53zM612 189v36h1v-36zM613 188v27h1v-27zM614 188v30h1v-30zM615 189v25h1v-25zM616 188v28h1v-28zM617 190v25h1v-25zM618 190v25h1v-25zM619 189v27h1v-27zM620 196v20h1v-20zM621 189v26h1v-26zM622 188v28h1v-28zM623 188v26h1v-26zM624 190v25h1v-25zM625 188v28h1v-28zM626 189v26h1v-26zM627 188v33h1v-33zM628 188v27h1v-27zM629 188v28h1v-28zM630 190v25h1v-25zM631 189v26h1v-26zM632 188v26h1v-26zM633 188v27h1v-27zM634 188v32h1v-32zM635 189v26h1v-26zM636 196v18h1v-18zM637 188v28h1v-28zM638 190v35h1v-35zM639 188v28h1v-28zM640 188v26h1v-26zM641 196v16h1v-16zM642 188v26h1v-26zM643 189v25h1v-25zM644 188v31h1v-31zM645 188v28h1v-28zM646 190v23h1v-23zM647 188v34h1v-34zM648 196v18h1v-18zM649 188v26h1v-26zM650 189v29h1v-29zM651 188v26h1v-26zM652 188v31h1v-31zM653 188v34h1v-34zM654 188v24h1v-24zM655 190v22h1v-22zM656 188v27h1v-27zM657 188v26h1v-26zM658 190v23h1v-23zM659 188v24h1v-24zM660 189v24h1v-24zM661 188v22h1v-22zM662 188v23h1v-23zM663 190v23h1v-23zM664 189v22h1v-22zM665 188v43h1v-43zM666 188v27h1v-27zM667 196v21h1v-21zM668 188v25h1v-25zM669 189v21h1v-21zM670 189v37h1v-37zM671 188v24h1v-24zM672 189v27h1v-27zM673 188v21h1v-21zM674 189v34h1v-34zM675 189v21h1v-21zM676 190v21h1v-21zM677 188v37h1v-37zM678 189v20h1v-20zM679 188v22h1v-22zM680 189v21h1v-21zM681 188v29h1v-29zM682 189v22h1v-22zM683 189v20h1v-20zM684 188v34h1v-34zM685 189v19h1v-19zM686 189v21h1v-21zM687 188v21h1v-21zM688 188v20h1v-20zM689 189v20h1v-20zM690 188v18h1v-18zM691 189v30h1v-30zM692 188v27h1v-27zM693 188v28h1v-28zM694 189v14h1v-14zM695 188v13h1v-13zM696 189v10h1v-10zM697 189v11h1v-11zM698 190v7h1v-7zM699 188v12h1v-12zM700 189v11h1v-11zM701 189v11h1v-11zM702 189v15h1v-15zM703 188v9h1v-9zM704 190v15h1v-15zM705 188v131h1v-131z" fill="#00be00"/><path d="M45 262v57h1v-57zM46 262v57h1v-57zM47 270v49h1v-49zM48 296v23h1v-23zM49 296v23h1v-23zM50 296v23h1v-23zM51 296v23h1v-23zM52 296v23h1v-23zM53 284v35h1v-35zM54 289v30h1v-30zM55 296v23h1v-23zM56 284v35h1v-35zM57 284v35h1v-35zM58 280v39h1v-39zM59 280v39h1v-39zM60 284v35h1v-35zM61 284v35h1v-35zM62 284v35h1v-35zM63 284v35h1v-35zM64 284v35h1v-35zM65 284v35h1v-35zM66 284v35h1v-35zM67 284v35h1v-35zM68 284v35h1v-35zM69 284v35h1v-35zM70 289v30h1v-30zM71 284v35h1v-35zM72 284v35h1v-35zM73 284v35h1v-35zM74 284v35h1v-35zM75 284v35h1v-35zM76 280v39h1v-39zM77 280v39h1v-39zM78 296v23h1v-23zM79 296v23h1v-23zM80 284v26h1v-26zM81 296v23h1v-23zM82 296v23h1v-23zM83 284v35h1v-35zM84 284v35h1v-35zM85 284v35h1v-35zM86 284v35h1v-35zM87 284v26h1v-26zM88 284v35h1v-35zM89 280v39h1v-39zM90 296v23h1v-23zM91 284v35h1v-35zM92 284v35h1v-35zM93 296v23h1v-23zM94 284v35h1v-35zM95 284v35h1v-35zM96 296v23h1v-23zM97 278v41h1v-41zM98 284v35h1v-35zM99 284v35h1v-35zM100 284v35h1v-35zM101 296v23h1v-23zM102 296v23h1v-23zM103 296v23h1v-23zM104 296v23h1v-23zM105 284v35h1v-35zM106 296v23h1v-23zM107 296v14h1v-14zM108 296v23h1v-23zM109 296v23h1v-23zM110 289v30h1v-30zM111 284v35h1v-35zM112 284v35h1v-35zM113 284v35h1v-35zM114 284v35h1v-35zM115 284v35h1v-35zM116 296v23h1v-23zM117 296v23h1v-23zM118 296v23h1v-23zM119 284v35h1v-35zM120 284v35h1v-35zM121 284v35h1v-35zM122 276v43h1v-43zM123 280v39h1v-39zM124 280v39h1v-39zM125 284v35h1v-35zM126 296v23h1v-23zM127 296v23h1v-23zM128 296v23h1v-23zM129 284v35h1v-35zM130 280v39h1v-39zM131 280v39h1v-39zM132 280v39h1v-39zM133 280v39h1v-39zM134 296v23h1v-23zM135 280v39h1v-39zM136 284v35h1v-35zM137 284v35h1v-35zM138 280v39h1v-39zM139 280v39h1v-39zM140 280v39h1v-39zM141 280v39h1v-39zM142 280v39h1v-39zM143 280v39h1v-39zM144 280v39h1v-39zM145 280v39h1v-39zM146 280v39h1v-39zM147 280v39h1v-39zM148 280v39h1v-39zM149 284v35h1v-35zM150 284v35h1v-35zM151 280v39h1v-39zM152 280v39h1v-39zM153 280v39h1v-39zM154 237v82h1v-82zM155 296v23h1v-23zM156 256v54h1v-54zM157 296v23h1v-23zM158 284v26h1v-26zM159 284v35h1v-35zM160 284v35h1v-35zM161 284v35h1v-35zM162 258v61h1v-61zM163 284v26h1v-26zM164 284v26h1v-26zM165 280v30h1v-30zM166 284v35h1v-35zM167 284v26h1v-26zM168 233v86h1v-86zM169 289v21h1v-21zM170 289v30h1v-30zM171 289v30h1v-30zM172 289v21h1v-21zM173 280v39h1v-39zM174 284v35h1v-35zM175 284v26h1v-26zM176 280v30h1v-30zM177 280v30h1v-30zM178 280v30h1v-30zM179 280v39h1v-39zM180 280v30h1v-30zM181 280v39h1v-39zM182 280v39h1v-39zM183 280v39h1v-39zM184 280v39h1v-39zM185 280v39h1v-39zM186 280v30h1v-30zM187 280v30h1v-30zM188 284v26h1v-26zM189 284v35h1v-35zM190 280v30h1v-30zM191 280v30h1v-30zM192 280v30h1v-30zM193 284v35h1v-35zM194 284v26h1v-26zM195 284v26h1v-26zM196 296v23h1v-23zM197 296v23h1v-23zM198 280v39h1v-39zM199 280v39h1v-39zM200 280v39h1v-39zM201 280v39h1v-39zM202 266v44h1v-44zM203 280v39h1v-39zM204 284v26h1v-26zM205 284v26h1v-26zM206 280v30h1v-30zM207 280v30h1v-30zM208 280v39h1v-39zM209 280v30h1v-30zM210 280v39h1v-39zM211 289v21h1v-21zM212 289v21h1v-21zM213 284v35h1v-35zM215 243v9h1v-9zM216 239v10h1v-10zM217 240v9h1v-9zM218 240v9h1v-9zM219 240v12h1v-12zM220 243v6h1v-6zM221 239v10h1v-10zM222 238v11h1v-11zM223 239v10h1v-10zM224 239v10h1v-10zM225 240v9h1v-9zM226 240v8h1v-8zM227 238v12h1v-12zM228 238v11h1v-11zM229 237v14h1v-14zM230 239v10h1v-10zM231 238v11h1v-11zM232 239v8h1v-8zM233 239v10h1v-10zM234 241v8h1v-8zM235 238v12h1v-12zM236 237v12h1v-12zM237 237v12h1v-12zM238 237v12h1v-12zM239 238v12h1v-12zM240 240v9h1v-9zM241 237v11h1v-11zM242 237v9h1v-9zM243 241v8h1v-8zM244 237v10h1v-10zM245 236v10h1v-10zM246 237v4h1v-4zM247 236v9h1v-9zM248 234v13h1v-13zM249 237v9h1v-9zM250 234v13h1v-13zM251 235v13h1v-13zM252 236v9h1v-9zM253 239v7h1v-7zM254 236v9h1v-9zM255 235v10h1v-10zM256 235v8h1v-8zM257 236v4h1v-4zM258 235v12h1v-12zM259 234v10h1v-10zM260 233v12h1v-12zM261 237v8h1v-8zM262 235v12h1v-12zM263 233v13h1v-13zM264 234v9h1v-9zM265 234v9h1v-9zM266 235v10h1v-10zM267 233v11h1v-11zM268 236v7h1v-7zM269 233v11h1v-11zM270 233v10h1v-10zM271 230v10h1v-10zM272 234v12h1v-12zM273 233v10h1v-10zM274 233v7h1v-7zM275 231v11h1v-11zM276 232v10h1v-10zM277 236v7h1v-7zM278 234v7h1v-7zM279 232v8h1v-8zM280 233v8h1v-8zM281 230v9h1v-9zM282 233v7h1v-7zM283 230v10h1v-10zM284 230v9h1v-9zM285 233v2h1v-2zM286 235v4h1v-4zM287 229v10h1v-10zM288 230v10h1v-10zM289 233v6h1v-6zM290 230v10h1v-10zM291 231v4h1v-4zM292 228v12h1v-12zM293 230v9h1v-9zM294 230v10h1v-10zM295 230v10h1v-10zM296 230v11h1v-11zM297 230v10h1v-10zM298 231v8h1v-8zM299 228v10h1v-10zM300 230v9h1v-9zM301 230v10h1v-10zM302 230v11h1v-11zM303 231v7h1v-7zM304 229v8h1v-8zM305 229v4h1v-4zM306 228v9h1v-9zM307 230v8h1v-8zM308 228v5h1v-5zM309 229v9h1v-9zM310 229v9h1v-9zM311 230v9h1v-9zM312 233v3h1v-3zM313 228v10h1v-10zM314 229v9h1v-9zM315 227v11h1v-11zM316 228v10h1v-10zM317 226v10h1v-10zM318 229v9h1v-9zM319 229v8h1v-8zM320 226v12h1v-12zM321 228v10h1v-10zM322 229v9h1v-9zM323 227v11h1v-11zM324 226v12h1v-12zM325 228v8h1v-8zM326 229v7h1v-7zM327 226v12h1v-12zM328 229v7h1v-7zM329 228v12h1v-12zM330 231v5h1v-5zM331 226v11h1v-11zM332 232v5h1v-5zM333 228v10h1v-10zM334 228v8h1v-8zM335 228v10h1v-10zM336 229v11h1v-11zM337 227v9h1v-9zM338 227v7h1v-7zM339 226v12h1v-12zM340 225v13h1v-13zM341 227v11h1v-11zM342 227v9h1v-9zM343 227v10h1v-10zM344 227v11h1v-11zM345 227v9h1v-9zM346 227v10h1v-10zM347 229v9h1v-9zM348 228v10h1v-10zM349 229v8h1v-8zM350 226v11h1v-11zM351 226v13h1v-13zM352 227v12h1v-12zM353 225v10h1v-10zM354 227v12h1v-12zM355 225v11h1v-11zM356 224v13h1v-13zM357 225v9h1v-9zM358 227v8h1v-8zM359 223v12h1v-12zM360 228v8h1v-8zM361 223v12h1v-12zM362 226v10h1v-10zM363 225v10h1v-10zM364 226v9h1v-9zM365 227v9h1v-9zM366 224v11h1v-11zM367 226v8h1v-8zM368 228v5h1v-5zM369 225v8h1v-8zM370 223v10h1v-10zM371 225v9h1v-9zM372 223v12h1v-12zM373 230v3h1v-3zM374 225v11h1v-11zM375 219v14h1v-14zM376 214v19h1v-19zM377 212v21h1v-21zM378 215v18h1v-18zM379 226v4h1v-4zM380 222v11h1v-11zM381 221v12h1v-12zM382 221v9h1v-9zM383 222v11h1v-11zM384 222v9h1v-9zM385 223v8h1v-8zM386 223v7h1v-7zM387 222v9h1v-9zM388 222v10h1v-10zM389 220v6h1v-6zM390 223v8h1v-8zM391 223v6h1v-6zM392 221v10h1v-10zM393 222v9h1v-9zM394 220v10h1v-10zM395 221v10h1v-10zM396 221v10h1v-10zM397 221v9h1v-9zM398 219v12h1v-12zM399 220v12h1v-12zM400 221v7h1v-7zM401 220v10h1v-10zM402 221v6h1v-6zM403 217v13h1v-13zM404 219v10h1v-10zM405 219v10h1v-10zM406 218v10h1v-10zM407 216v12h1v-12zM408 220v6h1v-6zM409 219v8h1v-8zM410 217v10h1v-10zM411 218v11h1v-11zM412 219v3h1v-3zM413 220v8h1v-8zM414 219v8h1v-8zM415 217v9h1v-9zM416 217v12h1v-12zM417 218v11h1v-11zM418 219v4h1v-4zM419 217v13h1v-13zM420 217v10h1v-10zM421 218v6h1v-6zM422 218v9h1v-9zM423 219v7h1v-7zM424 218v10h1v-10zM425 218v9h1v-9zM426 215v12h1v-12zM427 215v12h1v-12zM428 215v11h1v-11zM429 216v13h1v-13zM430 217v10h1v-10zM431 216v10h1v-10zM432 221v6h1v-6zM433 215v9h1v-9zM434 217v9h1v-9zM435 221v4h1v-4zM436 214v11h1v-11zM437 217v9h1v-9zM438 215v9h1v-9zM439 217v8h1v-8zM440 216v10h1v-10zM441 221v3h1v-3zM442 213v11h1v-11zM443 215v11h1v-11zM444 215v10h1v-10zM445 214v11h1v-11zM446 214v11h1v-11zM447 212v11h1v-11zM448 219v3h1v-3zM449 214v8h1v-8zM450 213v12h1v-12zM451 216v4h1v-4zM452 213v9h1v-9zM453 214v9h1v-9zM454 213v10h1v-10zM455 212v12h1v-12zM456 217v4h1v-4zM457 214v11h1v-11zM458 212v10h1v-10zM459 214v9h1v-9zM460 215v8h1v-8zM461 214v8h1v-8zM462 212v11h1v-11zM463 212v11h1v-11zM464 213v11h1v-11zM465 211v14h1v-14zM466 211v14h1v-14zM467 218v6h1v-6zM468 212v11h1v-11zM469 212v9h1v-9zM470 210v9h1v-9zM471 216v5h1v-5zM472 213v6h1v-6zM473 209v11h1v-11zM474 210v9h1v-9zM475 209v12h1v-12zM476 210v10h1v-10zM477 211v12h1v-12zM478 211v10h1v-10zM479 209v11h1v-11zM480 212v9h1v-9zM481 213v9h1v-9zM482 211v8h1v-8zM483 211v10h1v-10zM484 210v10h1v-10zM485 209v11h1v-11zM486 208v12h1v-12zM487 209v12h1v-12zM488 208v14h1v-14zM489 209v14h1v-14zM490 209v8h1v-8zM491 211v12h1v-12zM492 208v14h1v-14zM493 211v11h1v-11zM494 208v14h1v-14zM495 213v11h1v-11zM496 209v9h1v-9zM497 210v11h1v-11zM498 212v11h1v-11zM499 210v12h1v-12zM500 210v13h1v-13zM501 210v13h1v-13zM502 213v11h1v-11zM503 209v13h1v-13zM504 212v10h1v-10zM505 211v10h1v-10zM506 210v15h1v-15zM507 211v12h1v-12zM508 214v10h1v-10zM509 209v14h1v-14zM510 210v13h1v-13zM511 210v11h1v-11zM512 208v17h1v-17zM513 209v15h1v-15zM514 210v10h1v-10zM515 208v16h1v-16zM516 214v8h1v-8zM517 213v8h1v-8zM518 210v12h1v-12zM519 210v14h1v-14zM520 210v13h1v-13zM521 209v13h1v-13zM522 207v15h1v-15zM523 206v16h1v-16zM524 214v9h1v-9zM525 208v12h1v-12zM526 209v12h1v-12zM527 208v15h1v-15zM528 211v10h1v-10zM529 210v13h1v-13zM530 211v11h1v-11zM531 208v12h1v-12zM532 211v12h1v-12zM533 212v12h1v-12zM534 214v4h1v-4zM535 209v15h1v-15zM536 207v15h1v-15zM537 209v12h1v-12zM538 208v15h1v-15zM539 212v11h1v-11zM540 208v14h1v-14zM541 209v15h1v-15zM542 209v14h1v-14zM543 208v16h1v-16zM544 208v14h1v-14zM545 209v13h1v-13zM546 209v14h1v-14zM547 208v16h1v-16zM548 208v13h1v-13zM549 211v11h1v-11zM550 207v14h1v-14zM551 208v13h1v-13zM552 208v14h1v-14zM553 209v13h1v-13zM554 209v10h1v-10zM555 213v7h1v-7zM556 213v8h1v-8zM557 207v12h1v-12zM558 209v12h1v-12zM559 207v12h1v-12zM560 207v13h1v-13zM561 207v14h1v-14zM562 208v12h1v-12zM563 206v15h1v-15zM564 208v11h1v-11zM565 206v17h1v-17zM566 206v13h1v-13zM567 207v12h1v-12zM568 206v14h1v-14zM569 208v15h1v-15zM570 206v13h1v-13zM571 206v14h1v-14zM572 208v13h1v-13zM573 204v13h1v-13zM574 207v14h1v-14zM575 206v14h1v-14zM576 206v15h1v-15zM577 206v15h1v-15zM578 205v15h1v-15zM579 208v10h1v-10zM580 206v13h1v-13zM581 206v12h1v-12zM582 206v13h1v-13zM583 206v13h1v-13zM584 205v13h1v-13zM585 204v15h1v-15zM586 203v16h1v-16zM587 207v13h1v-13zM588 203v14h1v-14zM589 205v11h1v-11zM590 205v12h1v-12zM591 203v14h1v-14zM592 204v13h1v-13zM593 202v12h1v-12zM594 202v13h1v-13zM595 201v15h1v-15zM596 201v15h1v-15zM597 199v16h1v-16zM598 198v13h1v-13zM599 198v14h1v-14zM600 198v16h1v-16zM601 199v14h1v-14zM602 195v18h1v-18zM603 198v14h1v-14zM604 195v19h1v-19zM605 197v15h1v-15zM606 195v16h1v-16zM607 196v16h1v-16zM608 196v17h1v-17zM609 196v16h1v-16zM610 192v17h1v-17zM611 198v10h1v-10zM612 197v15h1v-15zM613 196v13h1v-13zM614 192v19h1v-19zM615 196v14h1v-14zM616 194v17h1v-17zM617 194v15h1v-15zM618 194v13h1v-13zM619 191v21h1v-21zM620 197v13h1v-13zM621 196v14h1v-14zM622 200v12h1v-12zM623 196v15h1v-15zM624 191v20h1v-20zM625 193v16h1v-16zM626 193v17h1v-17zM627 191v19h1v-19zM628 195v14h1v-14zM629 198v12h1v-12zM630 191v19h1v-19zM631 194v15h1v-15zM632 193v16h1v-16zM633 193v17h1v-17zM634 193v16h1v-16zM635 194v15h1v-15zM636 197v12h1v-12zM637 192v17h1v-17zM638 196v9h1v-9zM639 192v17h1v-17zM640 192v18h1v-18zM641 197v11h1v-11zM642 193v15h1v-15zM643 193v16h1v-16zM644 196v11h1v-11zM645 195v14h1v-14zM646 191v18h1v-18zM647 193v16h1v-16zM648 197v11h1v-11zM649 190v18h1v-18zM650 190v18h1v-18zM651 193v12h1v-12zM652 193v13h1v-13zM653 190v18h1v-18zM654 191v15h1v-15zM655 191v15h1v-15zM656 190v17h1v-17zM657 191v17h1v-17zM658 191v11h1v-11zM659 191v15h1v-15zM660 190v12h1v-12zM661 191v16h1v-16zM662 190v14h1v-14zM663 191v15h1v-15zM664 193v9h1v-9zM665 190v17h1v-17zM666 193v14h1v-14zM667 197v9h1v-9zM668 189v19h1v-19zM669 193v12h1v-12zM670 190v15h1v-15zM671 190v17h1v-17zM672 191v14h1v-14zM673 189v15h1v-15zM674 190v14h1v-14zM675 190v14h1v-14zM676 194v6h1v-6zM677 192v13h1v-13zM678 193v11h1v-11zM679 190v15h1v-15zM680 190v12h1v-12zM681 191v12h1v-12zM682 190v13h1v-13zM683 190v14h1v-14zM684 192v12h1v-12zM685 190v14h1v-14zM686 190v14h1v-14zM687 189v13h1v-13zM688 189v14h1v-14zM689 190v13h1v-13zM690 189v14h1v-14zM691 190v13h1v-13zM692 189v11h1v-11zM693 189v13h1v-13zM694 191v6h1v-6zM695 191v5h1v-5zM696 190v5h1v-5zM697 191v5h1v-5zM698 191v4h1v-4zM699 189v7h1v-7zM700 190v2h1v-2zM701 190v2h1v-2zM702 190v4h1v-4zM703 189v4h1v-4zM704 191v10h1v-10zM705 188v9h1v-9z" fill="#006400"/></g>
<g shape-rendering="crispEdges" stroke-width="1" stroke-dasharray="1 2" clip-path="url(#cl)"><path d="M45 198.5H753M45 202.5H753M45 214.5H753M45 227.5H753M45 239.5H753M45 243.5H753M45 248.5H753M45 255.5H753M45 268.5H753M45 280.5H753M45 289.5H753M45 296.5H753M45 309.5H753M115.5 189V319M186.5 189V319M257.5 189V319M328.5 189V319M399.5 189V319M470.5 189V319M541.5 189V319M612.5 189V319M683.5 189V319" stroke="#9a929a" fill="none"/><path d="M45 207.5H753" stroke="#9a929a" fill="none"/><path d="M45 208.5H753M45 284.5H753" stroke="#ff0000" fill="none"/></g>
<path d="M706.5 189V319" stroke="#000" stroke-width="1" stroke-dasharray="1 2" shape-rendering="crispEdges" fill="none"/>
<text x="41.5" y="203" text-anchor="end" class="t11">500</text>
<text x="41.5" y="219" text-anchor="end" class="t11">200</text>
<text x="41.5" y="232" text-anchor="end" class="t11">100</text>
<text x="41.5" y="244" text-anchor="end" class="t11">50</text>
<text x="41.5" y="260" text-anchor="end" class="t11">20</text>
<text x="41.5" y="273" text-anchor="end" class="t11">10</text>
<text x="41.5" y="285" text-anchor="end" class="t11">5</text>
<text x="41.5" y="301" text-anchor="end" class="t11">2</text>
<text x="41.5" y="314" text-anchor="end" class="t11">1</text>
<text x="185.6" y="334" text-anchor="middle" class="t11">5 GB</text>
<text x="327.6" y="334" text-anchor="middle" class="t11">10 GB</text>
<text x="469.6" y="334" text-anchor="middle" class="t11">15 GB</text>
<text x="611.6" y="334" text-anchor="middle" class="t11">20 GB</text>
<text x="49" y="205" class="t13">LDC</text>
<path d="M754.5 341V473.5H45" fill="none" stroke="#f8f8f8" stroke-width="1" shape-rendering="crispEdges"/>
<rect x="44.5" y="340.5" width="709" height="132" fill="#fff" stroke="#a0a0a0" stroke-width="1"/>
<g shape-rendering="crispEdges" stroke-width="1" stroke-dasharray="1 2" ><path d="M45 351.5H753M45 355.5H753M45 367.5H753M45 380.5H753M45 392.5H753M45 396.5H753M45 401.5H753M45 408.5H753M45 421.5H753M45 433.5H753M45 442.5H753M45 449.5H753M45 462.5H753M115.5 342V472M186.5 342V472M257.5 342V472M328.5 342V472M399.5 342V472M470.5 342V472M541.5 342V472M612.5 342V472M683.5 342V472" stroke="#606060" fill="none"/><path d="M45 360.5H753" stroke="#98a8a8" fill="none"/><path d="M45 361.5H753M45 437.5H753" stroke="#ff0000" fill="none"/></g>
<defs><clipPath id="cb"><path d="M45 433v39h1v-39zM46 462v10h1v-10zM47 462v10h1v-10zM48 462v10h1v-10zM49 462v10h1v-10zM50 462v10h1v-10zM51 462v10h1v-10zM52 449v23h1v-23zM53 449v23h1v-23zM54 449v23h1v-23zM55 462v10h1v-10zM56 462v10h1v-10zM57 449v23h1v-23zM58 462v10h1v-10zM59 462v10h1v-10zM60 449v23h1v-23zM61 462v10h1v-10zM62 449v23h1v-23zM63 449v23h1v-23zM64 462v10h1v-10zM65 462v10h1v-10zM66 462v10h1v-10zM67 462v10h1v-10zM68 462v10h1v-10zM69 462v10h1v-10zM70 462v10h1v-10zM71 462v10h1v-10zM72 462v10h1v-10zM73 462v10h1v-10zM74 462v10h1v-10zM75 462v10h1v-10zM76 462v10h1v-10zM77 462v10h1v-10zM78 462v10h1v-10zM79 449v23h1v-23zM80 462v10h1v-10zM81 449v23h1v-23zM82 462v10h1v-10zM83 462v10h1v-10zM84 462v10h1v-10zM85 462v10h1v-10zM86 462v10h1v-10zM87 462v10h1v-10zM88 462v10h1v-10zM89 462v10h1v-10zM90 449v23h1v-23zM91 462v10h1v-10zM92 462v10h1v-10zM93 462v10h1v-10zM94 462v10h1v-10zM95 462v10h1v-10zM96 449v23h1v-23zM97 462v10h1v-10zM98 462v10h1v-10zM99 449v23h1v-23zM100 449v23h1v-23zM101 449v23h1v-23zM102 462v10h1v-10zM103 462v10h1v-10zM104 462v10h1v-10zM105 462v10h1v-10zM106 462v10h1v-10zM107 449v23h1v-23zM108 449v23h1v-23zM109 449v23h1v-23zM110 462v10h1v-10zM111 462v10h1v-10zM112 462v10h1v-10zM113 462v10h1v-10zM114 449v23h1v-23zM115 449v23h1v-23zM116 449v23h1v-23zM117 462v10h1v-10zM118 462v10h1v-10zM119 462v10h1v-10zM120 462v10h1v-10zM121 462v10h1v-10zM122 449v23h1v-23zM123 449v23h1v-23zM124 462v10h1v-10zM125 449v23h1v-23zM126 449v23h1v-23zM127 449v23h1v-23zM128 449v23h1v-23zM129 449v23h1v-23zM130 449v23h1v-23zM131 462v10h1v-10zM132 462v10h1v-10zM133 462v10h1v-10zM134 462v10h1v-10zM135 449v23h1v-23zM136 449v23h1v-23zM137 449v23h1v-23zM138 462v10h1v-10zM139 449v23h1v-23zM140 449v23h1v-23zM141 449v23h1v-23zM142 449v23h1v-23zM143 449v23h1v-23zM144 462v10h1v-10zM145 462v10h1v-10zM146 462v10h1v-10zM147 462v10h1v-10zM148 462v10h1v-10zM149 449v23h1v-23zM150 449v23h1v-23zM151 449v23h1v-23zM152 449v23h1v-23zM153 449v23h1v-23zM154 449v23h1v-23zM155 449v23h1v-23zM156 462v10h1v-10zM157 449v23h1v-23zM158 449v23h1v-23zM159 462v10h1v-10zM160 449v23h1v-23zM161 449v23h1v-23zM162 462v10h1v-10zM163 449v23h1v-23zM164 462v10h1v-10zM165 462v10h1v-10zM166 442v30h1v-30zM167 442v30h1v-30zM168 462v10h1v-10zM169 462v10h1v-10zM170 442v30h1v-30zM171 462v10h1v-10zM172 462v10h1v-10zM173 462v10h1v-10zM174 449v23h1v-23zM175 449v23h1v-23zM176 449v23h1v-23zM177 449v23h1v-23zM178 449v23h1v-23zM179 449v23h1v-23zM180 449v23h1v-23zM181 449v23h1v-23zM182 449v23h1v-23zM183 462v10h1v-10zM184 462v10h1v-10zM185 462v10h1v-10zM186 462v10h1v-10zM187 449v23h1v-23zM188 462v10h1v-10zM189 449v23h1v-23zM190 462v10h1v-10zM191 449v23h1v-23zM192 462v10h1v-10zM193 449v23h1v-23zM194 449v23h1v-23zM195 462v10h1v-10zM196 449v23h1v-23zM197 462v10h1v-10zM198 449v23h1v-23zM199 462v10h1v-10zM200 449v23h1v-23zM201 462v10h1v-10zM202 421v51h1v-51zM203 462v10h1v-10zM204 449v23h1v-23zM205 449v23h1v-23zM206 462v10h1v-10zM207 462v10h1v-10zM208 449v23h1v-23zM209 449v23h1v-23zM210 449v23h1v-23zM211 449v23h1v-23zM212 449v23h1v-23zM213 449v23h1v-23zM214 430v42h1v-42zM215 437v35h1v-35zM216 433v39h1v-39zM217 437v35h1v-35zM218 437v35h1v-35zM219 437v35h1v-35zM220 437v35h1v-35zM221 437v35h1v-35zM222 433v39h1v-39zM223 437v35h1v-35zM224 437v35h1v-35zM225 437v35h1v-35zM226 437v35h1v-35zM227 437v35h1v-35zM228 433v39h1v-39zM229 433v39h1v-39zM230 433v39h1v-39zM231 433v39h1v-39zM232 437v35h1v-35zM233 437v35h1v-35zM234 433v39h1v-39zM235 433v39h1v-39zM236 437v35h1v-35zM237 437v35h1v-35zM238 433v39h1v-39zM239 433v39h1v-39zM240 433v39h1v-39zM241 433v39h1v-39zM242 437v35h1v-35zM243 437v35h1v-35zM244 437v35h1v-35zM245 437v35h1v-35zM246 433v39h1v-39zM247 433v39h1v-39zM248 433v39h1v-39zM249 433v39h1v-39zM250 427v45h1v-45zM251 433v39h1v-39zM252 433v39h1v-39zM253 437v35h1v-35zM254 437v35h1v-35zM255 437v35h1v-35zM256 433v39h1v-39zM257 437v35h1v-35zM258 437v35h1v-35zM259 437v35h1v-35zM260 433v39h1v-39zM261 427v45h1v-45zM262 430v42h1v-42zM263 437v35h1v-35zM264 437v35h1v-35zM265 433v39h1v-39zM266 437v35h1v-35zM267 437v35h1v-35zM268 437v35h1v-35zM269 433v39h1v-39zM270 437v35h1v-35zM271 433v39h1v-39zM272 427v45h1v-45zM273 433v39h1v-39zM274 433v39h1v-39zM275 433v39h1v-39zM276 433v39h1v-39zM277 433v39h1v-39zM278 433v39h1v-39zM279 433v39h1v-39zM280 433v39h1v-39zM281 430v42h1v-42zM282 433v39h1v-39zM283 430v42h1v-42zM284 430v42h1v-42zM285 433v39h1v-39zM286 433v39h1v-39zM287 433v39h1v-39zM288 433v39h1v-39zM289 433v39h1v-39zM290 433v39h1v-39zM291 433v39h1v-39zM292 433v39h1v-39zM293 433v39h1v-39zM294 433v39h1v-39zM295 433v39h1v-39zM296 430v42h1v-42zM297 430v42h1v-42zM298 430v42h1v-42zM299 430v42h1v-42zM300 430v42h1v-42zM301 430v42h1v-42zM302 430v42h1v-42zM303 433v39h1v-39zM304 433v39h1v-39zM305 427v45h1v-45zM306 427v45h1v-45zM307 433v39h1v-39zM308 427v45h1v-45zM309 430v42h1v-42zM310 430v42h1v-42zM311 430v42h1v-42zM312 430v42h1v-42zM313 427v45h1v-45zM314 427v45h1v-45zM315 430v42h1v-42zM316 430v42h1v-42zM317 423v49h1v-49zM318 423v49h1v-49zM319 423v49h1v-49zM320 427v45h1v-45zM321 427v45h1v-45zM322 427v45h1v-45zM323 427v45h1v-45zM324 430v42h1v-42zM325 430v42h1v-42zM326 430v42h1v-42zM327 425v47h1v-47zM328 425v47h1v-47zM329 430v42h1v-42zM330 430v42h1v-42zM331 430v42h1v-42zM332 425v47h1v-47zM333 430v42h1v-42zM334 430v42h1v-42zM335 430v42h1v-42zM336 421v51h1v-51zM337 425v47h1v-47zM338 425v47h1v-47zM339 430v42h1v-42zM340 427v45h1v-45zM341 430v42h1v-42zM342 425v47h1v-47zM343 427v45h1v-45zM344 427v45h1v-45zM345 425v47h1v-47zM346 425v47h1v-47zM347 425v47h1v-47zM348 423v49h1v-49zM349 425v47h1v-47zM350 425v47h1v-47zM351 425v47h1v-47zM352 425v47h1v-47zM353 427v45h1v-45zM354 425v47h1v-47zM355 425v47h1v-47zM356 421v51h1v-51zM357 427v45h1v-45zM358 419v53h1v-53zM359 423v49h1v-49zM360 423v49h1v-49zM361 427v45h1v-45zM362 425v47h1v-47zM363 425v47h1v-47zM364 427v45h1v-45zM365 427v45h1v-45zM366 425v47h1v-47zM367 425v47h1v-47zM368 425v47h1v-47zM369 425v47h1v-47zM370 427v45h1v-45zM371 427v45h1v-45zM372 427v45h1v-45zM373 427v45h1v-45zM374 423v49h1v-49zM375 423v49h1v-49zM376 423v49h1v-49zM377 427v45h1v-45zM378 427v45h1v-45zM379 427v45h1v-45zM380 425v47h1v-47zM381 425v47h1v-47zM382 427v45h1v-45zM383 427v45h1v-45zM384 427v45h1v-45zM385 427v45h1v-45zM386 427v45h1v-45zM387 423v49h1v-49zM388 425v47h1v-47zM389 423v49h1v-49zM390 425v47h1v-47zM391 425v47h1v-47zM392 423v49h1v-49zM393 425v47h1v-47zM394 425v47h1v-47zM395 421v51h1v-51zM396 421v51h1v-51zM397 423v49h1v-49zM398 423v49h1v-49zM399 421v51h1v-51zM400 421v51h1v-51zM401 425v47h1v-47zM402 423v49h1v-49zM403 423v49h1v-49zM404 423v49h1v-49zM405 425v47h1v-47zM406 425v47h1v-47zM407 425v47h1v-47zM408 423v49h1v-49zM409 425v47h1v-47zM410 425v47h1v-47zM411 416v56h1v-56zM412 416v56h1v-56zM413 417v55h1v-55zM414 423v49h1v-49zM415 425v47h1v-47zM416 425v47h1v-47zM417 423v49h1v-49zM418 421v51h1v-51zM419 425v47h1v-47zM420 425v47h1v-47zM421 425v47h1v-47zM422 425v47h1v-47zM423 421v51h1v-51zM424 421v51h1v-51zM425 425v47h1v-47zM426 421v51h1v-51zM427 423v49h1v-49zM428 423v49h1v-49zM429 423v49h1v-49zM430 423v49h1v-49zM431 423v49h1v-49zM432 423v49h1v-49zM433 423v49h1v-49zM434 423v49h1v-49zM435 423v49h1v-49zM436 423v49h1v-49zM437 423v49h1v-49zM438 419v53h1v-53zM439 423v49h1v-49zM440 419v53h1v-53zM441 419v53h1v-53zM442 419v53h1v-53zM443 419v53h1v-53zM444 417v55h1v-55zM445 417v55h1v-55zM446 415v57h1v-57zM447 419v53h1v-53zM448 419v53h1v-53zM449 419v53h1v-53zM450 419v53h1v-53zM451 419v53h1v-53zM452 419v53h1v-53zM453 417v55h1v-55zM454 419v53h1v-53zM455 419v53h1v-53zM456 419v53h1v-53zM457 419v53h1v-53zM458 419v53h1v-53zM459 419v53h1v-53zM460 417v55h1v-55zM461 417v55h1v-55zM462 416v56h1v-56zM463 419v53h1v-53zM464 417v55h1v-55zM465 416v56h1v-56zM466 417v55h1v-55zM467 417v55h1v-55zM468 413v59h1v-59zM469 412v60h1v-60zM470 417v55h1v-55zM471 417v55h1v-55zM472 417v55h1v-55zM473 409v63h1v-63zM474 409v63h1v-63zM475 409v63h1v-63zM476 409v63h1v-63zM477 409v63h1v-63zM478 417v55h1v-55zM479 416v56h1v-56zM480 417v55h1v-55zM481 415v57h1v-57zM482 415v57h1v-57zM483 415v57h1v-57zM484 415v57h1v-57zM485 417v55h1v-55zM486 417v55h1v-55zM487 417v55h1v-55zM488 417v55h1v-55zM489 417v55h1v-55zM490 417v55h1v-55zM491 416v56h1v-56zM492 417v55h1v-55zM493 415v57h1v-57zM494 415v57h1v-57zM495 416v56h1v-56zM496 416v56h1v-56zM497 413v59h1v-59zM498 415v57h1v-57zM499 416v56h1v-56zM500 417v55h1v-55zM501 413v59h1v-59zM502 413v59h1v-59zM503 413v59h1v-59zM504 415v57h1v-57zM505 417v55h1v-55zM506 417v55h1v-55zM507 417v55h1v-55zM508 417v55h1v-55zM509 416v56h1v-56zM510 413v59h1v-59zM511 413v59h1v-59zM512 416v56h1v-56zM513 411v61h1v-61zM514 411v61h1v-61zM515 411v61h1v-61zM516 417v55h1v-55zM517 413v59h1v-59zM518 417v55h1v-55zM519 416v56h1v-56zM520 408v64h1v-64zM521 416v56h1v-56zM522 410v62h1v-62zM523 410v62h1v-62zM524 415v57h1v-57zM525 415v57h1v-57zM526 415v57h1v-57zM527 416v56h1v-56zM528 413v59h1v-59zM529 413v59h1v-59zM530 413v59h1v-59zM531 413v59h1v-59zM532 416v56h1v-56zM533 416v56h1v-56zM534 410v62h1v-62zM535 416v56h1v-56zM536 415v57h1v-57zM537 417v55h1v-55zM538 417v55h1v-55zM539 417v55h1v-55zM540 417v55h1v-55zM541 417v55h1v-55zM542 417v55h1v-55zM543 416v56h1v-56zM544 415v57h1v-57zM545 415v57h1v-57zM546 415v57h1v-57zM547 415v57h1v-57zM548 413v59h1v-59zM549 416v56h1v-56zM550 412v60h1v-60zM551 413v59h1v-59zM552 416v56h1v-56zM553 415v57h1v-57zM554 415v57h1v-57zM555 415v57h1v-57zM556 412v60h1v-60zM557 412v60h1v-60zM558 412v60h1v-60zM559 416v56h1v-56zM560 415v57h1v-57zM561 415v57h1v-57zM562 415v57h1v-57zM563 413v59h1v-59zM564 413v59h1v-59zM565 411v61h1v-61zM566 411v61h1v-61zM567 411v61h1v-61zM568 415v57h1v-57zM569 407v65h1v-65zM570 415v57h1v-57zM571 415v57h1v-57zM572 406v66h1v-66zM573 411v61h1v-61zM574 407v65h1v-65zM575 412v60h1v-60zM576 413v59h1v-59zM577 413v59h1v-59zM578 411v61h1v-61zM579 408v64h1v-64zM580 412v60h1v-60zM581 408v64h1v-64zM582 411v61h1v-61zM583 409v63h1v-63zM584 409v63h1v-63zM585 407v65h1v-65zM586 411v61h1v-61zM587 411v61h1v-61zM588 408v64h1v-64zM589 408v64h1v-64zM590 411v61h1v-61zM591 410v62h1v-62zM592 410v62h1v-62zM593 406v66h1v-66zM594 406v66h1v-66zM595 406v66h1v-66zM596 405v67h1v-67zM597 408v64h1v-64zM598 408v64h1v-64zM599 407v65h1v-65zM600 407v65h1v-65zM601 405v67h1v-67zM602 405v67h1v-67zM603 405v67h1v-67zM604 405v67h1v-67zM605 406v66h1v-66zM606 404v68h1v-68zM607 405v67h1v-67zM608 404v68h1v-68zM609 404v68h1v-68zM610 397v75h1v-75zM611 397v75h1v-75zM612 403v69h1v-69zM613 403v69h1v-69zM614 402v70h1v-70zM615 399v73h1v-73zM616 402v70h1v-70zM617 402v70h1v-70zM618 399v73h1v-73zM619 399v73h1v-73zM620 399v73h1v-73zM621 396v76h1v-76zM622 403v69h1v-69zM623 404v68h1v-68zM624 401v71h1v-71zM625 402v70h1v-70zM626 402v60h1v-60zM627 396v66h1v-66zM628 396v66h1v-66zM629 403v69h1v-69zM630 401v71h1v-71zM631 401v71h1v-71zM632 402v70h1v-70zM633 402v70h1v-70zM634 402v70h1v-70zM635 402v60h1v-60zM636 402v70h1v-70zM637 402v70h1v-70zM638 402v70h1v-70zM639 401v71h1v-71zM640 402v60h1v-60zM641 401v61h1v-61zM642 403v59h1v-59zM643 399v63h1v-63zM644 399v63h1v-63zM645 401v61h1v-61zM646 401v71h1v-71zM647 402v60h1v-60zM648 402v70h1v-70zM649 399v63h1v-63zM650 399v63h1v-63zM651 402v60h1v-60zM652 399v73h1v-73zM653 399v73h1v-73zM654 392v80h1v-80zM655 401v71h1v-71zM656 401v71h1v-71zM657 400v72h1v-72zM658 400v72h1v-72zM659 401v71h1v-71zM660 395v77h1v-77zM661 401v61h1v-61zM662 401v61h1v-61zM663 401v61h1v-61zM664 401v61h1v-61zM665 401v61h1v-61zM666 399v63h1v-63zM667 397v75h1v-75zM668 399v73h1v-73zM669 399v73h1v-73zM670 395v67h1v-67zM671 394v68h1v-68zM672 396v66h1v-66zM673 396v66h1v-66zM674 397v75h1v-75zM675 398v64h1v-64zM676 399v63h1v-63zM677 396v66h1v-66zM678 398v64h1v-64zM679 394v68h1v-68zM680 394v78h1v-78zM681 396v66h1v-66zM682 396v53h1v-53zM683 396v53h1v-53zM684 396v76h1v-76zM685 392v80h1v-80zM686 392v70h1v-70zM687 388v74h1v-74zM688 392v70h1v-70zM689 386v76h1v-76zM690 390v72h1v-72zM691 392v70h1v-70zM692 392v70h1v-70zM693 392v70h1v-70zM694 390v72h1v-72zM695 390v52h1v-52zM696 389v53h1v-53zM697 390v52h1v-52zM698 390v52h1v-52zM699 390v52h1v-52zM700 388v54h1v-54zM701 388v54h1v-54zM702 388v54h1v-54zM703 386v56h1v-56zM704 386v63h1v-63z"/></clipPath></defs><g shape-rendering="crispEdges"><path d="M45 433v39h1v-39zM46 462v10h1v-10zM47 462v10h1v-10zM48 462v10h1v-10zM49 462v10h1v-10zM50 462v10h1v-10zM51 462v10h1v-10zM52 449v23h1v-23zM53 449v23h1v-23zM54 449v23h1v-23zM55 462v10h1v-10zM56 462v10h1v-10zM57 449v23h1v-23zM58 462v10h1v-10zM59 462v10h1v-10zM60 449v23h1v-23zM61 462v10h1v-10zM62 449v23h1v-23zM63 449v23h1v-23zM64 462v10h1v-10zM65 462v10h1v-10zM66 462v10h1v-10zM67 462v10h1v-10zM68 462v10h1v-10zM69 462v10h1v-10zM70 462v10h1v-10zM71 462v10h1v-10zM72 462v10h1v-10zM73 462v10h1v-10zM74 462v10h1v-10zM75 462v10h1v-10zM76 462v10h1v-10zM77 462v10h1v-10zM78 462v10h1v-10zM79 449v23h1v-23zM80 462v10h1v-10zM81 449v23h1v-23zM82 462v10h1v-10zM83 462v10h1v-10zM84 462v10h1v-10zM85 462v10h1v-10zM86 462v10h1v-10zM87 462v10h1v-10zM88 462v10h1v-10zM89 462v10h1v-10zM90 449v23h1v-23zM91 462v10h1v-10zM92 462v10h1v-10zM93 462v10h1v-10zM94 462v10h1v-10zM95 462v10h1v-10zM96 449v23h1v-23zM97 462v10h1v-10zM98 462v10h1v-10zM99 449v23h1v-23zM100 449v23h1v-23zM101 449v23h1v-23zM102 462v10h1v-10zM103 462v10h1v-10zM104 462v10h1v-10zM105 462v10h1v-10zM106 462v10h1v-10zM107 449v23h1v-23zM108 449v23h1v-23zM109 449v23h1v-23zM110 462v10h1v-10zM111 462v10h1v-10zM112 462v10h1v-10zM113 462v10h1v-10zM114 449v23h1v-23zM115 449v23h1v-23zM116 449v23h1v-23zM117 462v10h1v-10zM118 462v10h1v-10zM119 462v10h1v-10zM120 462v10h1v-10zM121 462v10h1v-10zM122 449v23h1v-23zM123 449v23h1v-23zM124 462v10h1v-10zM125 449v23h1v-23zM126 449v23h1v-23zM127 449v23h1v-23zM128 449v23h1v-23zM129 449v23h1v-23zM130 449v23h1v-23zM131 462v10h1v-10zM132 462v10h1v-10zM133 462v10h1v-10zM134 462v10h1v-10zM135 449v23h1v-23zM136 449v23h1v-23zM137 449v23h1v-23zM138 462v10h1v-10zM139 449v23h1v-23zM140 449v23h1v-23zM141 449v23h1v-23zM142 449v23h1v-23zM143 449v23h1v-23zM144 462v10h1v-10zM145 462v10h1v-10zM146 462v10h1v-10zM147 462v10h1v-10zM148 462v10h1v-10zM149 449v23h1v-23zM150 449v23h1v-23zM151 449v23h1v-23zM152 449v23h1v-23zM153 449v23h1v-23zM154 449v23h1v-23zM155 449v23h1v-23zM156 462v10h1v-10zM157 449v23h1v-23zM158 449v23h1v-23zM159 462v10h1v-10zM160 449v23h1v-23zM161 449v23h1v-23zM162 462v10h1v-10zM163 449v23h1v-23zM164 462v10h1v-10zM165 462v10h1v-10zM166 442v30h1v-30zM167 442v30h1v-30zM168 462v10h1v-10zM169 462v10h1v-10zM170 442v30h1v-30zM171 462v10h1v-10zM172 462v10h1v-10zM173 462v10h1v-10zM174 449v23h1v-23zM175 449v23h1v-23zM176 449v23h1v-23zM177 449v23h1v-23zM178 449v23h1v-23zM179 449v23h1v-23zM180 449v23h1v-23zM181 449v23h1v-23zM182 449v23h1v-23zM183 462v10h1v-10zM184 462v10h1v-10zM185 462v10h1v-10zM186 462v10h1v-10zM187 449v23h1v-23zM188 462v10h1v-10zM189 449v23h1v-23zM190 462v10h1v-10zM191 449v23h1v-23zM192 462v10h1v-10zM193 449v23h1v-23zM194 449v23h1v-23zM195 462v10h1v-10zM196 449v23h1v-23zM197 462v10h1v-10zM198 449v23h1v-23zM199 462v10h1v-10zM200 449v23h1v-23zM201 462v10h1v-10zM202 421v51h1v-51zM203 462v10h1v-10zM204 449v23h1v-23zM205 449v23h1v-23zM206 462v10h1v-10zM207 462v10h1v-10zM208 449v23h1v-23zM209 449v23h1v-23zM210 449v23h1v-23zM211 449v23h1v-23zM212 449v23h1v-23zM213 449v23h1v-23zM214 430v42h1v-42zM215 437v35h1v-35zM216 433v39h1v-39zM217 437v35h1v-35zM218 437v35h1v-35zM219 437v35h1v-35zM220 437v35h1v-35zM221 437v35h1v-35zM222 433v39h1v-39zM223 437v35h1v-35zM224 437v35h1v-35zM225 437v35h1v-35zM226 437v35h1v-35zM227 437v35h1v-35zM228 433v39h1v-39zM229 433v39h1v-39zM230 433v39h1v-39zM231 433v39h1v-39zM232 437v35h1v-35zM233 437v35h1v-35zM234 433v39h1v-39zM235 433v39h1v-39zM236 437v35h1v-35zM237 437v35h1v-35zM238 433v39h1v-39zM239 433v39h1v-39zM240 433v39h1v-39zM241 433v39h1v-39zM242 437v35h1v-35zM243 437v35h1v-35zM244 437v35h1v-35zM245 437v35h1v-35zM246 433v39h1v-39zM247 433v39h1v-39zM248 433v39h1v-39zM249 433v39h1v-39zM250 427v45h1v-45zM251 433v39h1v-39zM252 433v39h1v-39zM253 437v35h1v-35zM254 437v35h1v-35zM255 437v35h1v-35zM256 433v39h1v-39zM257 437v35h1v-35zM258 437v35h1v-35zM259 437v35h1v-35zM260 433v39h1v-39zM261 427v45h1v-45zM262 430v42h1v-42zM263 437v35h1v-35zM264 437v35h1v-35zM265 433v39h1v-39zM266 437v35h1v-35zM267 437v35h1v-35zM268 437v35h1v-35zM269 433v39h1v-39zM270 437v35h1v-35zM271 433v39h1v-39zM272 427v45h1v-45zM273 433v39h1v-39zM274 433v39h1v-39zM275 433v39h1v-39zM276 433v39h1v-39zM277 433v39h1v-39zM278 433v39h1v-39zM279 433v39h1v-39zM280 433v39h1v-39zM281 430v42h1v-42zM282 433v39h1v-39zM283 430v42h1v-42zM284 430v42h1v-42zM285 433v39h1v-39zM286 433v39h1v-39zM287 433v39h1v-39zM288 433v39h1v-39zM289 433v39h1v-39zM290 433v39h1v-39zM291 433v39h1v-39zM292 433v39h1v-39zM293 433v39h1v-39zM294 433v39h1v-39zM295 433v39h1v-39zM296 430v42h1v-42zM297 430v42h1v-42zM298 430v42h1v-42zM299 430v42h1v-42zM300 430v42h1v-42zM301 430v42h1v-42zM302 430v42h1v-42zM303 433v39h1v-39zM304 433v39h1v-39zM305 427v45h1v-45zM306 427v45h1v-45zM307 433v39h1v-39zM308 427v45h1v-45zM309 430v42h1v-42zM310 430v42h1v-42zM311 430v42h1v-42zM312 430v42h1v-42zM313 427v45h1v-45zM314 427v45h1v-45zM315 430v42h1v-42zM316 430v42h1v-42zM317 423v49h1v-49zM318 423v49h1v-49zM319 423v49h1v-49zM320 427v45h1v-45zM321 427v45h1v-45zM322 427v45h1v-45zM323 427v45h1v-45zM324 430v42h1v-42zM325 430v42h1v-42zM326 430v42h1v-42zM327 425v47h1v-47zM328 425v47h1v-47zM329 430v42h1v-42zM330 430v42h1v-42zM331 430v42h1v-42zM332 425v47h1v-47zM333 430v42h1v-42zM334 430v42h1v-42zM335 430v42h1v-42zM336 421v51h1v-51zM337 425v47h1v-47zM338 425v47h1v-47zM339 430v42h1v-42zM340 427v45h1v-45zM341 430v42h1v-42zM342 425v47h1v-47zM343 427v45h1v-45zM344 427v45h1v-45zM345 425v47h1v-47zM346 425v47h1v-47zM347 425v47h1v-47zM348 423v49h1v-49zM349 425v47h1v-47zM350 425v47h1v-47zM351 425v47h1v-47zM352 425v47h1v-47zM353 427v45h1v-45zM354 425v47h1v-47zM355 425v47h1v-47zM356 421v51h1v-51zM357 427v45h1v-45zM358 419v53h1v-53zM359 423v49h1v-49zM360 423v49h1v-49zM361 427v45h1v-45zM362 425v47h1v-47zM363 425v47h1v-47zM364 427v45h1v-45zM365 427v45h1v-45zM366 425v47h1v-47zM367 425v47h1v-47zM368 425v47h1v-47zM369 425v47h1v-47zM370 427v45h1v-45zM371 427v45h1v-45zM372 427v45h1v-45zM373 427v45h1v-45zM374 423v49h1v-49zM375 423v49h1v-49zM376 423v49h1v-49zM377 427v45h1v-45zM378 427v45h1v-45zM379 427v45h1v-45zM380 425v47h1v-47zM381 425v47h1v-47zM382 427v45h1v-45zM383 427v45h1v-45zM384 427v45h1v-45zM385 427v45h1v-45zM386 427v45h1v-45zM387 423v49h1v-49zM388 425v47h1v-47zM389 423v49h1v-49zM390 425v47h1v-47zM391 425v47h1v-47zM392 423v49h1v-49zM393 425v47h1v-47zM394 425v47h1v-47zM395 421v51h1v-51zM396 421v51h1v-51zM397 423v49h1v-49zM398 423v49h1v-49zM399 421v51h1v-51zM400 421v51h1v-51zM401 425v47h1v-47zM402 423v49h1v-49zM403 423v49h1v-49zM404 423v49h1v-49zM405 425v47h1v-47zM406 425v47h1v-47zM407 425v47h1v-47zM408 423v49h1v-49zM409 425v47h1v-47zM410 425v47h1v-47zM411 416v56h1v-56zM412 416v56h1v-56zM413 417v55h1v-55zM414 423v49h1v-49zM415 425v47h1v-47zM416 425v47h1v-47zM417 423v49h1v-49zM418 421v51h1v-51zM419 425v47h1v-47zM420 425v47h1v-47zM421 425v47h1v-47zM422 425v47h1v-47zM423 421v51h1v-51zM424 421v51h1v-51zM425 425v47h1v-47zM426 421v51h1v-51zM427 423v49h1v-49zM428 423v49h1v-49zM429 423v49h1v-49zM430 423v49h1v-49zM431 423v49h1v-49zM432 423v49h1v-49zM433 423v49h1v-49zM434 423v49h1v-49zM435 423v49h1v-49zM436 423v49h1v-49zM437 423v49h1v-49zM438 419v53h1v-53zM439 423v49h1v-49zM440 419v53h1v-53zM441 419v53h1v-53zM442 419v53h1v-53zM443 419v53h1v-53zM444 417v55h1v-55zM445 417v55h1v-55zM446 415v57h1v-57zM447 419v53h1v-53zM448 419v53h1v-53zM449 419v53h1v-53zM450 419v53h1v-53zM451 419v53h1v-53zM452 419v53h1v-53zM453 417v55h1v-55zM454 419v53h1v-53zM455 419v53h1v-53zM456 419v53h1v-53zM457 419v53h1v-53zM458 419v53h1v-53zM459 419v53h1v-53zM460 417v55h1v-55zM461 417v55h1v-55zM462 416v56h1v-56zM463 419v53h1v-53zM464 417v55h1v-55zM465 416v56h1v-56zM466 417v55h1v-55zM467 417v55h1v-55zM468 413v59h1v-59zM469 412v60h1v-60zM470 417v55h1v-55zM471 417v55h1v-55zM472 417v55h1v-55zM473 409v63h1v-63zM474 409v63h1v-63zM475 409v63h1v-63zM476 409v63h1v-63zM477 409v63h1v-63zM478 417v55h1v-55zM479 416v56h1v-56zM480 417v55h1v-55zM481 415v57h1v-57zM482 415v57h1v-57zM483 415v57h1v-57zM484 415v57h1v-57zM485 417v55h1v-55zM486 417v55h1v-55zM487 417v55h1v-55zM488 417v55h1v-55zM489 417v55h1v-55zM490 417v55h1v-55zM491 416v56h1v-56zM492 417v55h1v-55zM493 415v57h1v-57zM494 415v57h1v-57zM495 416v56h1v-56zM496 416v56h1v-56zM497 413v59h1v-59zM498 415v57h1v-57zM499 416v56h1v-56zM500 417v55h1v-55zM501 413v59h1v-59zM502 413v59h1v-59zM503 413v59h1v-59zM504 415v57h1v-57zM505 417v55h1v-55zM506 417v55h1v-55zM507 417v55h1v-55zM508 417v55h1v-55zM509 416v56h1v-56zM510 413v59h1v-59zM511 413v59h1v-59zM512 416v56h1v-56zM513 411v61h1v-61zM514 411v61h1v-61zM515 411v61h1v-61zM516 417v55h1v-55zM517 413v59h1v-59zM518 417v55h1v-55zM519 416v56h1v-56zM520 408v64h1v-64zM521 416v56h1v-56zM522 410v62h1v-62zM523 410v62h1v-62zM524 415v57h1v-57zM525 415v57h1v-57zM526 415v57h1v-57zM527 416v56h1v-56zM528 413v59h1v-59zM529 413v59h1v-59zM530 413v59h1v-59zM531 413v59h1v-59zM532 416v56h1v-56zM533 416v56h1v-56zM534 410v62h1v-62zM535 416v56h1v-56zM536 415v57h1v-57zM537 417v55h1v-55zM538 417v55h1v-55zM539 417v55h1v-55zM540 417v55h1v-55zM541 417v55h1v-55zM542 417v55h1v-55zM543 416v56h1v-56zM544 415v57h1v-57zM545 415v57h1v-57zM546 415v57h1v-57zM547 415v57h1v-57zM548 413v59h1v-59zM549 416v56h1v-56zM550 412v60h1v-60zM551 413v59h1v-59zM552 416v56h1v-56zM553 415v57h1v-57zM554 415v57h1v-57zM555 415v57h1v-57zM556 412v60h1v-60zM557 412v60h1v-60zM558 412v60h1v-60zM559 416v56h1v-56zM560 415v57h1v-57zM561 415v57h1v-57zM562 415v57h1v-57zM563 413v59h1v-59zM564 413v59h1v-59zM565 411v61h1v-61zM566 411v61h1v-61zM567 411v61h1v-61zM568 415v57h1v-57zM569 407v65h1v-65zM570 415v57h1v-57zM571 415v57h1v-57zM572 406v66h1v-66zM573 411v61h1v-61zM574 407v65h1v-65zM575 412v60h1v-60zM576 413v59h1v-59zM577 413v59h1v-59zM578 411v61h1v-61zM579 408v64h1v-64zM580 412v60h1v-60zM581 408v64h1v-64zM582 411v61h1v-61zM583 409v63h1v-63zM584 409v63h1v-63zM585 407v65h1v-65zM586 411v61h1v-61zM587 411v61h1v-61zM588 408v64h1v-64zM589 408v64h1v-64zM590 411v61h1v-61zM591 410v62h1v-62zM592 410v62h1v-62zM593 406v66h1v-66zM594 406v66h1v-66zM595 406v66h1v-66zM596 405v67h1v-67zM597 408v64h1v-64zM598 408v64h1v-64zM599 407v65h1v-65zM600 407v65h1v-65zM601 405v67h1v-67zM602 405v67h1v-67zM603 405v67h1v-67zM604 405v67h1v-67zM605 406v66h1v-66zM606 404v68h1v-68zM607 405v67h1v-67zM608 404v68h1v-68zM609 404v68h1v-68zM610 397v75h1v-75zM611 397v75h1v-75zM612 403v69h1v-69zM613 403v69h1v-69zM614 402v70h1v-70zM615 399v73h1v-73zM616 402v70h1v-70zM617 402v70h1v-70zM618 399v73h1v-73zM619 399v73h1v-73zM620 399v73h1v-73zM621 396v76h1v-76zM622 403v69h1v-69zM623 404v68h1v-68zM624 401v71h1v-71zM625 402v70h1v-70zM626 402v60h1v-60zM627 396v66h1v-66zM628 396v66h1v-66zM629 403v69h1v-69zM630 401v71h1v-71zM631 401v71h1v-71zM632 402v70h1v-70zM633 402v70h1v-70zM634 402v70h1v-70zM635 402v60h1v-60zM636 402v70h1v-70zM637 402v70h1v-70zM638 402v70h1v-70zM639 401v71h1v-71zM640 402v60h1v-60zM641 401v61h1v-61zM642 403v59h1v-59zM643 399v63h1v-63zM644 399v63h1v-63zM645 401v61h1v-61zM646 401v71h1v-71zM647 402v60h1v-60zM648 402v70h1v-70zM649 399v63h1v-63zM650 399v63h1v-63zM651 402v60h1v-60zM652 399v73h1v-73zM653 399v73h1v-73zM654 392v80h1v-80zM655 401v71h1v-71zM656 401v71h1v-71zM657 400v72h1v-72zM658 400v72h1v-72zM659 401v71h1v-71zM660 395v77h1v-77zM661 401v61h1v-61zM662 401v61h1v-61zM663 401v61h1v-61zM664 401v61h1v-61zM665 401v61h1v-61zM666 399v63h1v-63zM667 397v75h1v-75zM668 399v73h1v-73zM669 399v73h1v-73zM670 395v67h1v-67zM671 394v68h1v-68zM672 396v66h1v-66zM673 396v66h1v-66zM674 397v75h1v-75zM675 398v64h1v-64zM676 399v63h1v-63zM677 396v66h1v-66zM678 398v64h1v-64zM679 394v68h1v-68zM680 394v78h1v-78zM681 396v66h1v-66zM682 396v53h1v-53zM683 396v53h1v-53zM684 396v76h1v-76zM685 392v80h1v-80zM686 392v70h1v-70zM687 388v74h1v-74zM688 392v70h1v-70zM689 386v76h1v-76zM690 390v72h1v-72zM691 392v70h1v-70zM692 392v70h1v-70zM693 392v70h1v-70zM694 390v72h1v-72zM695 390v52h1v-52zM696 389v53h1v-53zM697 390v52h1v-52zM698 390v52h1v-52zM699 390v52h1v-52zM700 388v54h1v-54zM701 388v54h1v-54zM702 388v54h1v-54zM703 386v56h1v-56zM704 386v63h1v-63z" fill="#0550f5"/><path d="M214 462v10h1v-10zM215 462v10h1v-10zM216 462v10h1v-10zM217 462v10h1v-10zM218 462v10h1v-10zM219 462v10h1v-10zM220 462v10h1v-10zM221 462v10h1v-10zM222 462v10h1v-10zM223 462v10h1v-10zM224 462v10h1v-10zM225 462v10h1v-10zM226 462v10h1v-10zM227 462v10h1v-10zM228 462v10h1v-10zM229 462v10h1v-10zM230 462v10h1v-10zM231 462v10h1v-10zM232 462v10h1v-10zM233 462v10h1v-10zM234 462v10h1v-10zM235 462v10h1v-10zM236 462v10h1v-10zM237 462v10h1v-10zM238 462v10h1v-10zM239 462v10h1v-10zM240 462v10h1v-10zM241 462v10h1v-10zM242 462v10h1v-10zM243 462v10h1v-10zM244 462v10h1v-10zM245 462v10h1v-10zM246 462v10h1v-10zM247 462v10h1v-10zM248 462v10h1v-10zM249 462v10h1v-10zM250 462v10h1v-10zM251 462v10h1v-10zM252 462v10h1v-10zM253 462v10h1v-10zM254 462v10h1v-10zM255 462v10h1v-10zM256 462v10h1v-10zM257 462v10h1v-10zM258 462v10h1v-10zM259 462v1h1v-1zM260 462v10h1v-10zM261 462v10h1v-10zM262 462v10h1v-10zM263 449v23h1v-23zM264 462v10h1v-10zM265 462v10h1v-10zM266 449v23h1v-23zM267 449v23h1v-23zM268 449v23h1v-23zM269 449v23h1v-23zM270 449v23h1v-23zM271 449v13h1v-13zM272 449v23h1v-23zM273 449v23h1v-23zM274 449v23h1v-23zM275 462v10h1v-10zM276 462v10h1v-10zM277 462v10h1v-10zM278 462v1h1v-1zM279 449v23h1v-23zM280 449v23h1v-23zM281 462v10h1v-10zM282 449v23h1v-23zM283 449v23h1v-23zM284 449v23h1v-23zM285 449v23h1v-23zM286 449v23h1v-23zM287 449v23h1v-23zM288 449v23h1v-23zM289 449v23h1v-23zM290 449v23h1v-23zM291 449v23h1v-23zM292 449v23h1v-23zM293 449v23h1v-23zM294 449v23h1v-23zM295 449v23h1v-23zM296 449v23h1v-23zM297 449v23h1v-23zM298 449v23h1v-23zM299 449v23h1v-23zM300 449v13h1v-13zM301 449v23h1v-23zM302 449v23h1v-23zM303 449v23h1v-23zM304 449v23h1v-23zM305 449v23h1v-23zM306 449v23h1v-23zM307 449v23h1v-23zM308 449v23h1v-23zM309 449v23h1v-23zM310 449v23h1v-23zM311 449v23h1v-23zM312 449v23h1v-23zM313 449v23h1v-23zM314 449v23h1v-23zM315 449v23h1v-23zM316 449v23h1v-23zM317 449v23h1v-23zM318 449v23h1v-23zM319 449v23h1v-23zM320 449v23h1v-23zM321 449v23h1v-23zM322 449v23h1v-23zM323 449v23h1v-23zM324 449v23h1v-23zM325 449v23h1v-23zM326 449v23h1v-23zM327 449v23h1v-23zM328 449v23h1v-23zM329 449v23h1v-23zM330 449v13h1v-13zM331 449v23h1v-23zM332 449v23h1v-23zM333 449v23h1v-23zM334 449v23h1v-23zM335 449v23h1v-23zM336 449v23h1v-23zM337 449v23h1v-23zM338 449v23h1v-23zM339 449v23h1v-23zM340 449v23h1v-23zM341 449v23h1v-23zM342 449v23h1v-23zM343 449v23h1v-23zM344 449v23h1v-23zM345 449v23h1v-23zM346 449v23h1v-23zM347 449v23h1v-23zM348 449v23h1v-23zM349 449v23h1v-23zM350 449v23h1v-23zM351 449v23h1v-23zM352 449v23h1v-23zM353 449v23h1v-23zM354 449v23h1v-23zM355 449v23h1v-23zM356 449v23h1v-23zM357 449v23h1v-23zM358 449v23h1v-23zM359 449v23h1v-23zM360 449v23h1v-23zM361 449v23h1v-23zM362 449v23h1v-23zM363 449v23h1v-23zM364 449v23h1v-23zM365 449v23h1v-23zM366 449v23h1v-23zM367 449v23h1v-23zM368 449v23h1v-23zM369 449v23h1v-23zM370 449v23h1v-23zM371 449v23h1v-23zM372 449v23h1v-23zM373 449v23h1v-23zM374 449v23h1v-23zM375 449v23h1v-23zM376 437v35h1v-35zM377 437v35h1v-35zM378 437v35h1v-35zM379 442v30h1v-30zM380 442v20h1v-20zM381 442v20h1v-20zM382 442v20h1v-20zM383 442v30h1v-30zM384 449v23h1v-23zM385 442v20h1v-20zM386 442v20h1v-20zM387 449v13h1v-13zM388 442v20h1v-20zM389 449v23h1v-23zM390 449v13h1v-13zM391 442v20h1v-20zM392 442v30h1v-30zM393 442v30h1v-30zM394 449v23h1v-23zM395 442v20h1v-20zM396 449v13h1v-13zM397 449v13h1v-13zM398 442v20h1v-20zM399 442v20h1v-20zM400 442v30h1v-30zM401 442v30h1v-30zM402 449v23h1v-23zM403 449v13h1v-13zM404 449v13h1v-13zM405 442v20h1v-20zM406 442v20h1v-20zM407 442v20h1v-20zM408 442v20h1v-20zM409 442v20h1v-20zM410 442v20h1v-20zM411 449v23h1v-23zM412 449v23h1v-23zM413 449v13h1v-13zM414 449v13h1v-13zM415 442v20h1v-20zM416 442v20h1v-20zM417 442v20h1v-20zM418 442v20h1v-20zM419 442v20h1v-20zM420 442v20h1v-20zM421 442v30h1v-30zM422 442v20h1v-20zM423 442v30h1v-30zM424 442v20h1v-20zM425 437v25h1v-25zM426 437v25h1v-25zM427 437v25h1v-25zM428 437v25h1v-25zM429 437v25h1v-25zM430 437v25h1v-25zM431 437v25h1v-25zM432 442v30h1v-30zM433 442v20h1v-20zM434 442v20h1v-20zM435 442v20h1v-20zM436 437v35h1v-35zM437 437v35h1v-35zM438 437v35h1v-35zM439 437v35h1v-35zM440 437v35h1v-35zM441 437v35h1v-35zM442 442v20h1v-20zM443 442v20h1v-20zM444 442v20h1v-20zM445 437v35h1v-35zM446 437v25h1v-25zM447 437v35h1v-35zM448 437v25h1v-25zM449 433v29h1v-29zM450 433v29h1v-29zM451 433v39h1v-39zM452 433v39h1v-39zM453 433v39h1v-39zM454 430v42h1v-42zM455 430v42h1v-42zM456 442v20h1v-20zM457 433v29h1v-29zM458 433v29h1v-29zM459 433v29h1v-29zM460 433v29h1v-29zM461 433v29h1v-29zM462 430v32h1v-32zM463 433v29h1v-29zM464 433v29h1v-29zM465 433v16h1v-16zM466 433v16h1v-16zM467 430v32h1v-32zM468 433v29h1v-29zM469 433v29h1v-29zM470 433v29h1v-29zM471 433v29h1v-29zM472 430v32h1v-32zM473 430v32h1v-32zM474 430v19h1v-19zM475 430v19h1v-19zM476 433v16h1v-16zM477 433v16h1v-16zM478 433v29h1v-29zM479 433v29h1v-29zM480 433v16h1v-16zM481 433v16h1v-16zM482 433v29h1v-29zM483 433v16h1v-16zM484 433v29h1v-29zM485 442v20h1v-20zM486 430v19h1v-19zM487 449v23h1v-23zM488 433v29h1v-29zM489 433v16h1v-16zM490 433v29h1v-29zM491 433v16h1v-16zM492 430v32h1v-32zM493 430v32h1v-32zM494 433v29h1v-29zM495 433v16h1v-16zM496 433v16h1v-16zM497 433v16h1v-16zM498 433v16h1v-16zM499 433v29h1v-29zM500 442v20h1v-20zM501 433v29h1v-29zM502 433v29h1v-29zM503 433v29h1v-29zM504 433v39h1v-39zM505 433v29h1v-29zM506 433v29h1v-29zM507 430v32h1v-32zM508 430v32h1v-32zM509 430v32h1v-32zM510 433v16h1v-16zM511 433v16h1v-16zM512 433v29h1v-29zM513 433v29h1v-29zM514 433v29h1v-29zM515 433v29h1v-29zM516 449v1h1v-1zM517 433v16h1v-16zM518 433v29h1v-29zM519 433v29h1v-29zM520 433v29h1v-29zM521 433v29h1v-29zM522 433v16h1v-16zM523 433v16h1v-16zM524 430v19h1v-19zM525 433v16h1v-16zM526 433v16h1v-16zM527 430v19h1v-19zM528 430v19h1v-19zM529 433v29h1v-29zM530 433v16h1v-16zM531 433v16h1v-16zM532 433v29h1v-29zM533 442v7h1v-7zM534 433v16h1v-16zM535 433v16h1v-16zM536 433v29h1v-29zM537 430v32h1v-32zM538 433v16h1v-16zM539 433v16h1v-16zM540 433v29h1v-29zM541 433v29h1v-29zM542 433v16h1v-16zM543 433v16h1v-16zM544 430v32h1v-32zM545 430v42h1v-42zM546 433v29h1v-29zM547 442v20h1v-20zM548 433v16h1v-16zM549 433v29h1v-29zM550 433v29h1v-29zM551 433v29h1v-29zM552 427v22h1v-22zM553 427v22h1v-22zM554 425v24h1v-24zM555 427v35h1v-35zM556 427v35h1v-35zM557 427v22h1v-22zM558 430v19h1v-19zM559 430v19h1v-19zM560 430v42h1v-42zM561 430v32h1v-32zM562 430v32h1v-32zM563 427v35h1v-35zM564 427v35h1v-35zM565 427v35h1v-35zM566 427v22h1v-22zM567 427v35h1v-35zM568 427v35h1v-35zM569 427v35h1v-35zM570 427v35h1v-35zM571 430v19h1v-19zM572 430v32h1v-32zM573 430v32h1v-32zM574 427v35h1v-35zM575 427v35h1v-35zM576 427v35h1v-35zM577 427v35h1v-35zM578 449v13h1v-13zM579 427v35h1v-35zM580 430v32h1v-32zM581 430v32h1v-32zM582 427v35h1v-35zM583 427v35h1v-35zM584 430v32h1v-32zM585 427v35h1v-35zM586 427v35h1v-35zM587 427v22h1v-22zM588 427v35h1v-35zM589 430v32h1v-32zM590 449v13h1v-13zM591 425v37h1v-37zM592 425v37h1v-37zM593 425v37h1v-37zM594 425v37h1v-37zM595 425v37h1v-37zM596 421v22h1v-22zM597 421v41h1v-41zM598 422v21h1v-21zM599 423v20h1v-20zM600 421v22h1v-22zM601 422v21h1v-21zM602 423v20h1v-20zM603 421v21h1v-21zM604 422v18h1v-18zM605 423v19h1v-19zM606 422v18h1v-18zM607 421v41h1v-41zM608 420v20h1v-20zM609 420v23h1v-23zM610 423v39h1v-39zM611 421v41h1v-41zM612 418v24h1v-24zM613 422v40h1v-40zM614 418v24h1v-24zM615 417v24h1v-24zM616 421v21h1v-21zM617 422v18h1v-18zM618 420v22h1v-22zM619 420v20h1v-20zM620 419v21h1v-21zM621 420v20h1v-20zM622 420v19h1v-19zM623 418v31h1v-31zM624 418v21h1v-21zM625 421v18h1v-18zM626 418v21h1v-21zM627 417v20h1v-20zM628 418v31h1v-31zM629 419v20h1v-20zM630 420v18h1v-18zM631 418v19h1v-19zM632 417v32h1v-32zM633 418v20h1v-20zM634 418v20h1v-20zM635 417v22h1v-22zM636 416v33h1v-33zM637 418v21h1v-21zM638 418v19h1v-19zM639 418v31h1v-31zM640 416v22h1v-22zM641 417v20h1v-20zM642 415v23h1v-23zM643 419v18h1v-18zM644 417v21h1v-21zM645 416v33h1v-33zM646 419v19h1v-19zM647 417v32h1v-32zM648 415v22h1v-22zM649 417v32h1v-32zM650 417v20h1v-20zM651 415v21h1v-21zM652 416v22h1v-22zM653 416v21h1v-21zM654 415v22h1v-22zM655 419v19h1v-19zM656 416v22h1v-22zM657 417v20h1v-20zM658 416v20h1v-20zM659 413v24h1v-24zM660 414v22h1v-22zM661 415v23h1v-23zM662 414v24h1v-24zM663 415v24h1v-24zM664 414v23h1v-23zM665 416v23h1v-23zM666 416v22h1v-22zM667 415v34h1v-34zM668 413v25h1v-25zM669 415v22h1v-22zM670 415v21h1v-21zM671 415v34h1v-34zM672 416v22h1v-22zM673 415v23h1v-23zM674 413v23h1v-23zM675 413v36h1v-36zM676 414v23h1v-23zM677 414v22h1v-22zM678 416v24h1v-24zM679 413v36h1v-36zM680 414v23h1v-23zM681 414v23h1v-23zM682 413v22h1v-22zM683 411v23h1v-23zM684 411v20h1v-20zM685 412v20h1v-20zM686 408v25h1v-25zM687 411v20h1v-20zM688 412v20h1v-20zM689 409v23h1v-23zM690 408v23h1v-23zM691 408v24h1v-24zM692 409v22h1v-22zM693 407v23h1v-23zM694 407v24h1v-24zM695 403v28h1v-28zM696 405v24h1v-24zM697 406v21h1v-21zM698 404v20h1v-20zM699 404v20h1v-20zM700 405v18h1v-18zM701 401v22h1v-22zM702 402v21h1v-21zM703 401v24h1v-24zM704 403v19h1v-19z" fill="#002882"/></g>
<g shape-rendering="crispEdges" stroke-width="1" stroke-dasharray="1 2" clip-path="url(#cb)"><path d="M45 351.5H753M45 355.5H753M45 367.5H753M45 380.5H753M45 392.5H753M45 396.5H753M45 401.5H753M45 408.5H753M45 421.5H753M45 433.5H753M45 442.5H753M45 449.5H753M45 462.5H753M115.5 342V472M186.5 342V472M257.5 342V472M328.5 342V472M399.5 342V472M470.5 342V472M541.5 342V472M612.5 342V472M683.5 342V472" stroke="#b8a478" fill="none"/><path d="M45 360.5H753" stroke="#b8a478" fill="none"/><path d="M45 361.5H753M45 437.5H753" stroke="#ff0000" fill="none"/></g>
<path d="M706.5 342V472" stroke="#000" stroke-width="1" stroke-dasharray="1 2" shape-rendering="crispEdges" fill="none"/>
<text x="41.5" y="356" text-anchor="end" class="t11">500</text>
<text x="41.5" y="372" text-anchor="end" class="t11">200</text>
<text x="41.5" y="385" text-anchor="end" class="t11">100</text>
<text x="41.5" y="397" text-anchor="end" class="t11">50</text>
<text x="41.5" y="413" text-anchor="end" class="t11">20</text>
<text x="41.5" y="426" text-anchor="end" class="t11">10</text>
<text x="41.5" y="438" text-anchor="end" class="t11">5</text>
<text x="41.5" y="454" text-anchor="end" class="t11">2</text>
<text x="41.5" y="467" text-anchor="end" class="t11">1</text>
<text x="185.6" y="487" text-anchor="middle" class="t11">5 GB</text>
<text x="327.6" y="487" text-anchor="middle" class="t11">10 GB</text>
<text x="469.6" y="487" text-anchor="middle" class="t11">15 GB</text>
<text x="611.6" y="487" text-anchor="middle" class="t11">20 GB</text>
<text x="49" y="358" class="t13">BIS</text>
</svg>
</div>
</body></html>
